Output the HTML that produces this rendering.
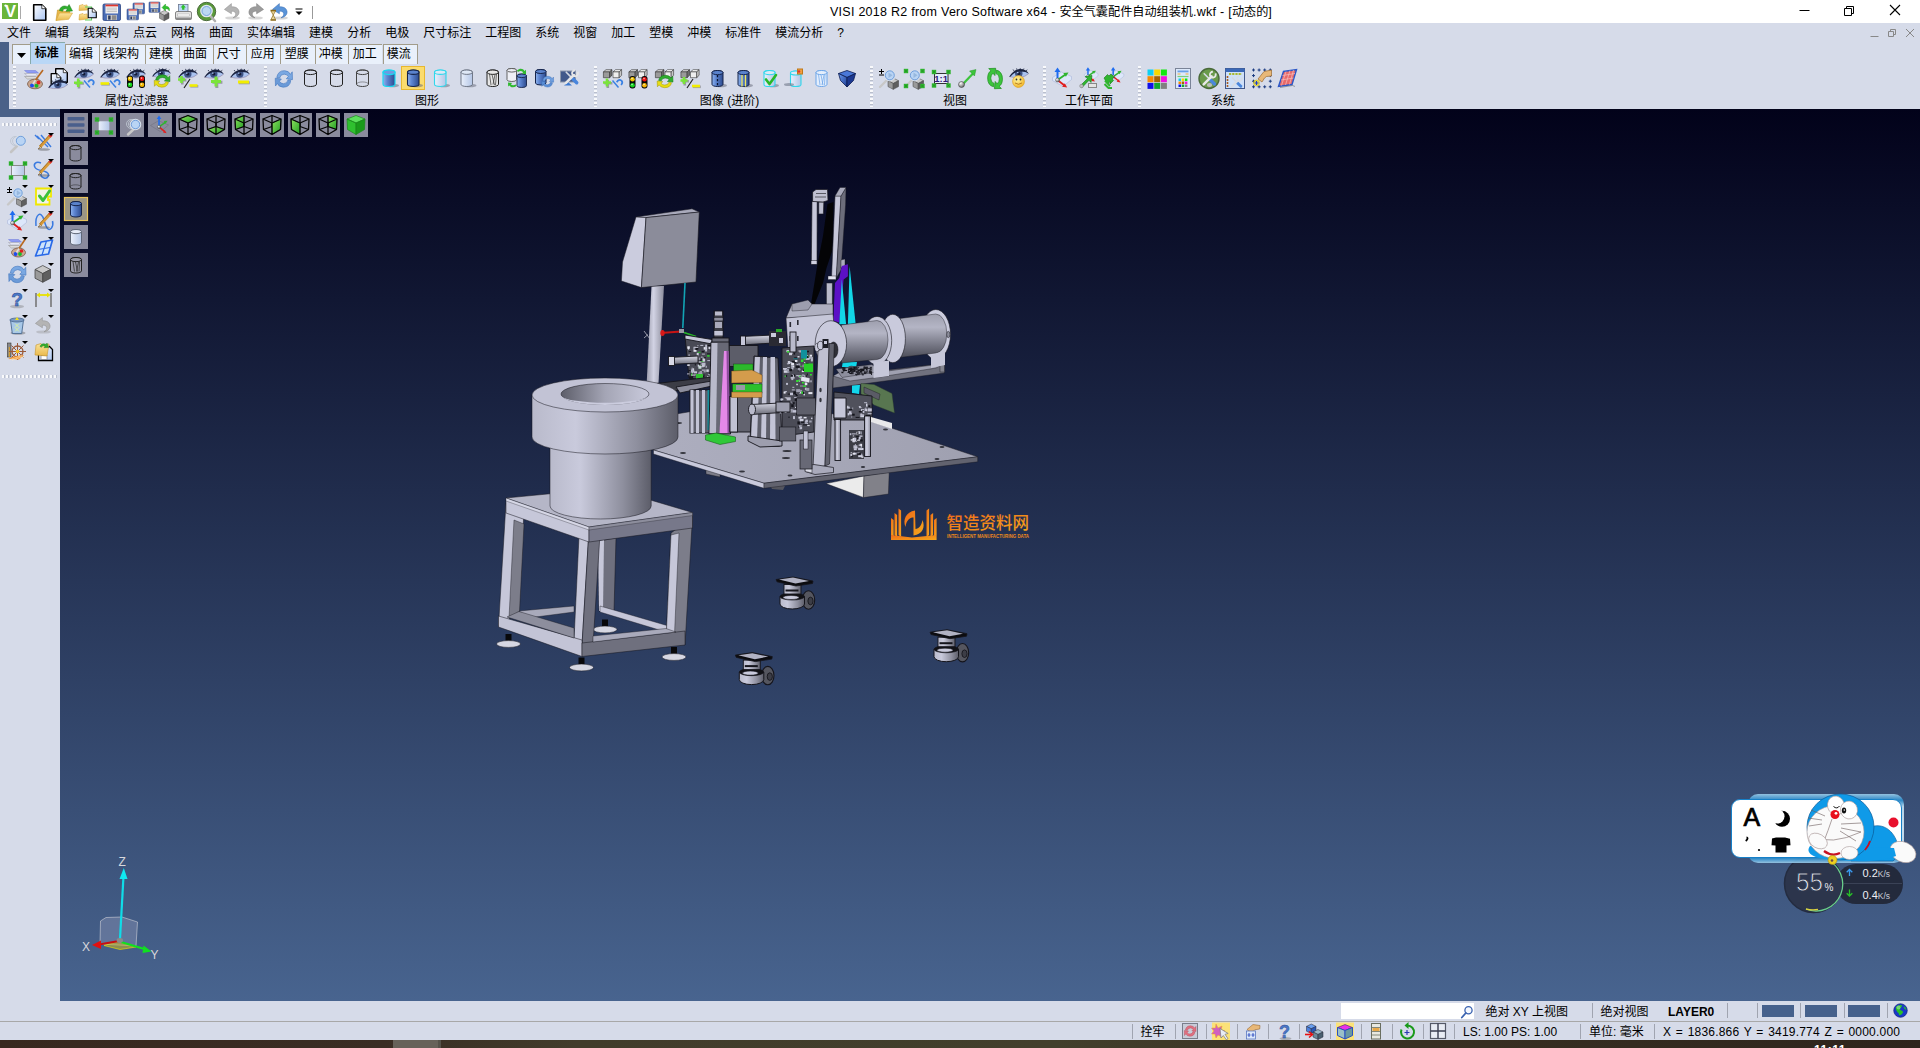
<!DOCTYPE html><html lang="zh"><head><meta charset="utf-8"><title>VISI 2018 R2</title><style>
*{box-sizing:border-box;margin:0;padding:0}
html,body{width:1920px;height:1048px;overflow:hidden;background:#d6dbe9;font-family:"Liberation Sans","Noto Sans CJK SC",sans-serif;font-size:12px;color:#000}
.abs{position:absolute}
#title{position:absolute;left:0;top:0;width:1920px;height:23px;background:#fff}
#title .t{position:absolute;left:830px;top:1.500px;font-size:12.150px;white-space:nowrap;color:#000}
#title .t b{font-weight:normal;font-size:12.500px;letter-spacing:.26px}
#menu{position:absolute;left:0;top:23px;width:1920px;height:20px;background:#d6dbe9;white-space:nowrap}
#menu span{display:inline-block;padding:0 7px;line-height:21px;font-size:12px}
#lstrip{position:absolute;left:0;top:42px;width:9px;height:75px;background:#4a6188}
#lstrip2{position:absolute;left:0;top:109px;width:60px;height:8px;background:#4a6188}
#tabs{position:absolute;left:12px;top:44px;height:20px;white-space:nowrap}
.tab{position:absolute;top:0;height:20px;background:#e9f0fb;border:1px solid #a29c8a;border-bottom:none;border-right:none;font-size:12px;line-height:19px;text-align:center;padding-right:2.500px}
.tab.act{top:-2px;height:22px;background:#b9d7f6;font-weight:bold;line-height:21px;border-color:#8aa}
#toolbar{position:absolute;left:9px;top:64px;width:1911px;height:45px;background:#d6dbe9}
.grip{position:absolute;width:3px;top:66px;height:41px;background-image:repeating-linear-gradient(#fff 0 2px,#b4bac8 2px 3px,rgba(0,0,0,0) 3px 4px);opacity:.85}
.glabel{position:absolute;top:93.800px;font-size:12px;line-height:14px;white-space:nowrap;transform:translateX(-50%)}
#side{position:absolute;left:0;top:117px;width:60px;height:884px;background:#d6dbe9}
.hgrip{position:absolute;left:2px;width:56px;height:3px;background-image:repeating-linear-gradient(90deg,#fff 0 2px,#b4bac8 2px 3px,rgba(0,0,0,0) 3px 4px);opacity:.85}
#view{position:absolute;left:60px;top:109px;width:1860px;height:892px;background:linear-gradient(#02021a 0%,#48648f 100%);overflow:hidden}
#st1{position:absolute;left:0;top:1001px;width:1920px;height:20px;background:#d6dbe9}
#st2{position:absolute;left:0;top:1021px;width:1920px;height:19px;background:#d6dbe9;border-top:1px solid #a8a8a8}
#task{position:absolute;left:0;top:1040px;width:1920px;height:8px;background:linear-gradient(90deg,#38281f 0%,#3a2d24 20%,#413c2b 30%,#423f2c 55%,#3a3224 70%,#2e241c 100%)}
.ico{position:absolute;overflow:visible}
.st{position:absolute;font-size:12px;line-height:14px;white-space:nowrap}
.vsep{position:absolute;width:1px;background:#a0a4b0}
</style></head><body>
<div id="title"><div class="t"><b>VISI 2018 R2 from Vero Software x64 - </b>安全气囊配件自动组装机<b>.wkf - [</b>动态的<b>]</b></div>
<svg class="ico" style="left:0px;top:0px" width="1920" height="23" viewBox="0 0 1920 23"><defs><linearGradient id="gb" x1="0" x2="1"><stop offset="0" stop-color="#8fb4ee"/><stop offset=".35" stop-color="#5e86d2"/><stop offset="1" stop-color="#2c4a8e"/></linearGradient><linearGradient id="gl" x1="0" x2="1"><stop offset="0" stop-color="#eaf0fb"/><stop offset="1" stop-color="#b4c6e6"/></linearGradient><linearGradient id="gdoc" x1="0" y1="0" x2="1" y2="1"><stop offset="0" stop-color="#ffffff"/><stop offset="1" stop-color="#a9c4f2"/></linearGradient><linearGradient id="gfold" x1="0" y1="0" x2="0" y2="1"><stop offset="0" stop-color="#fbe39a"/><stop offset="1" stop-color="#e9b94b"/></linearGradient><linearGradient id="ggrey" x1="0" y1="0" x2="0" y2="1"><stop offset="0" stop-color="#c9c9c9"/><stop offset="1" stop-color="#7d7d7d"/></linearGradient><linearGradient id="ggem" x1="0" y1="0" x2="1" y2="1"><stop offset="0" stop-color="#6c9cf0"/><stop offset="1" stop-color="#1c3c94"/></linearGradient><radialGradient id="gsmile" cx=".4" cy=".35" r=".7"><stop offset="0" stop-color="#fff6a0"/><stop offset="1" stop-color="#f0b020"/></radialGradient><radialGradient id="gball" cx=".35" cy=".3" r=".8"><stop offset="0" stop-color="#ffffff"/><stop offset="1" stop-color="#555"/></radialGradient><linearGradient id="ggreen" x1="0" y1="0" x2="1" y2="1"><stop offset="0" stop-color="#8ee060"/><stop offset="1" stop-color="#23a023"/></linearGradient></defs><rect x="2" y="3" width="16" height="16" fill="#6ab53a"/><text x="10.600" y="17" font-size="16.500" font-weight="bold" fill="#fff" text-anchor="middle" font-family="Liberation Sans,sans-serif">V</text><circle cx="5.600" cy="5.600" r="1.200" fill="#fff"/><rect x="20" y="6" width="1" height="13" fill="#aaa"/><g transform="translate(33.00 4.00)" ><path d="M0.7 0.7h8.1l4 4v11.6h-12.1z" fill="url(#gdoc)" stroke="#000" stroke-width="1.6" stroke-linejoin="round"/><path d="M8.8 0.7v4h4" fill="#fff" stroke="#000" stroke-width=".7"/></g><g transform="translate(55.00 4.00)" ><path d="M1 16.500l1.500-10.500h5l1 1.300h6.500l-.5 2z" fill="#e8b84a" stroke="#c8962a" stroke-width=".6"/><path d="M1 16.500l3.500-7.500h13l-3.800 6.300z" fill="url(#gfold)" stroke="#d6a53a" stroke-width=".6"/><path d="M4.500 6.500c.5-4 4.500-5.500 8-3.800l1.600-2.200 3.400 6.500-6.600.3 1.400-2c-2-1-4.300-.4-4.800 2z" fill="#2fae2f" stroke="#1a7a1a" stroke-width=".5"/></g><g transform="translate(78.00 3.00)" ><path d="M1 7.500l.5-5 3.500-1 1 1 3-.600.500 5.100z" fill="url(#gfold)" stroke="#d6a53a" stroke-width=".6"/><path d="M1 17l.5-5.500 3.500-1 1 1 3-.600.500 5.100z" fill="url(#gfold)" stroke="#d6a53a" stroke-width=".6"/><path d="M7 4h6.500v13H7" fill="none" stroke="#5fd25f" stroke-width="1.100"/><g transform="translate(9.50 4.50)" ><path d="M0.7 0.7h4.1l4 4v5.6h-8.1z" fill="url(#gdoc)" stroke="#000" stroke-width="1.1" stroke-linejoin="round"/><path d="M4.8 0.7v4h4" fill="#fff" stroke="#000" stroke-width=".7"/></g></g><g transform="translate(103.00 4.00)" ><g transform="scale(1.029)"><rect x="0" y="0" width="17" height="16" rx="1.3" fill="#4a6db5" stroke="#2b4482" stroke-width=".8"/><rect x="2.4" y="0.6" width="12.2" height="8.6" fill="#f4f4f4"/><rect x="2.4" y="0.6" width="12.2" height="1.7" fill="#e0382c"/><path d="M3.4 4h10.2M3.4 5.7h10.2M3.4 7.4h10.2" stroke="#b5b5b5" stroke-width=".8"/><rect x="3.8" y="10.6" width="9.6" height="5" fill="#d0d0d0"/><rect x="5" y="11.2" width="2.4" height="4" fill="#2b3a5c"/><rect x="8.6" y="11" width="4.2" height="4.4" fill="#8a8a8a"/></g></g><g transform="translate(133.00 3.00)" ><g transform="scale(0.676)"><rect x="0" y="0" width="17" height="16" rx="1.3" fill="#4a6db5" stroke="#2b4482" stroke-width=".8"/><rect x="2.4" y="0.6" width="12.2" height="8.6" fill="#f4f4f4"/><rect x="2.4" y="0.6" width="12.2" height="1.7" fill="#e0382c"/><path d="M3.4 4h10.2M3.4 5.7h10.2M3.4 7.4h10.2" stroke="#b5b5b5" stroke-width=".8"/><rect x="3.8" y="10.6" width="9.6" height="5" fill="#d0d0d0"/><rect x="5" y="11.2" width="2.4" height="4" fill="#2b3a5c"/><rect x="8.6" y="11" width="4.2" height="4.4" fill="#8a8a8a"/></g></g><g transform="translate(127.00 9.00)" ><g transform="scale(0.676)"><rect x="0" y="0" width="17" height="16" rx="1.3" fill="#4a6db5" stroke="#2b4482" stroke-width=".8"/><rect x="2.4" y="0.6" width="12.2" height="8.6" fill="#f4f4f4"/><rect x="2.4" y="0.6" width="12.2" height="1.7" fill="#e0382c"/><path d="M3.4 4h10.2M3.4 5.7h10.2M3.4 7.4h10.2" stroke="#b5b5b5" stroke-width=".8"/><rect x="3.8" y="10.6" width="9.6" height="5" fill="#d0d0d0"/><rect x="5" y="11.2" width="2.4" height="4" fill="#2b3a5c"/><rect x="8.6" y="11" width="4.2" height="4.4" fill="#8a8a8a"/></g></g><g transform="translate(149.00 2.00)" ><g transform="scale(0.647)"><rect x="0" y="0" width="17" height="16" rx="1.3" fill="#4a6db5" stroke="#2b4482" stroke-width=".8"/><rect x="2.4" y="0.6" width="12.2" height="8.6" fill="#f4f4f4"/><rect x="2.4" y="0.6" width="12.2" height="1.7" fill="#e0382c"/><path d="M3.4 4h10.2M3.4 5.7h10.2M3.4 7.4h10.2" stroke="#b5b5b5" stroke-width=".8"/><rect x="3.8" y="10.6" width="9.6" height="5" fill="#d0d0d0"/><rect x="5" y="11.2" width="2.4" height="4" fill="#2b3a5c"/><rect x="8.6" y="11" width="4.2" height="4.4" fill="#8a8a8a"/></g></g><g transform="translate(159.50 10.50)" ><g transform="scale(0.950)"><path d="M0 2.6L5 0l5 2.6-5 2.6z" fill="#c9c9c9" stroke="#444" stroke-width=".5"/><path d="M0 2.6v5.6l5 2.6V5.2z" fill="#9a9a9a" stroke="#444" stroke-width=".5"/><path d="M10 2.6v5.6l-5 2.6V5.2z" fill="#5f5f5f" stroke="#444" stroke-width=".5"/></g></g><g transform="translate(161.00 3.00)" ><path d="M1 4.500L4.500 1v2.200c3 0 4.800 2 3.600 4.800-.2-1.800-1.500-2.400-3.600-2.300V8z" fill="#2fc02f" stroke="#1a8a1a" stroke-width=".4"/></g><g transform="translate(175.00 3.00)" ><rect x="3.500" y="1.500" width="9.500" height="8" fill="#bcd6f6" stroke="#6c7890" stroke-width=".8"/><path d="M8.200 1.500l-2.600 3h1.500v2.300h2.300V4.500h1.500z" fill="#2fc02f"/><rect x="0.500" y="8.500" width="16" height="8" rx="1.500" fill="#e4e4e4" stroke="#6a6a6a" stroke-width=".8"/><rect x="2.500" y="11" width="12" height="2" fill="#fff" stroke="#999" stroke-width=".4"/><rect x="0.500" y="14.500" width="16" height="2" fill="#8c8c8c"/></g><g transform="translate(197.00 1.50)" ><circle cx="9.500" cy="10" r="9.200" fill="#5a9a3a" stroke="#4a6a3a" stroke-width="1"/><path d="M13 14l5 5.500" stroke="#b0b0b0" stroke-width="2.600" stroke-linecap="round"/><circle cx="9.500" cy="9.500" r="5.600" fill="#bcd8f2" stroke="#e0e6ee" stroke-width="1.500"/><circle cx="9.500" cy="9.500" r="4.500" fill="none" stroke="#6a9ad8" stroke-width=".8"/></g><g transform="translate(224.00 3.00)" ><ellipse cx="8.5" cy="15" rx="7.5" ry="1.6" fill="#8a8a8a" fill-opacity=".35"/><path d="M7.4 0.6L0.4 6.4l7 4.4V8.2c3-.2 4.8 1.2 4.2 3.6-.3 1.2-1.3 2.2-2.6 3 4.2-.8 6.6-3.400 6-6.600C14.400 5 11.400 3.600 7.400 3.700z" fill="#b4b4b4" stroke="#8c8c8c" stroke-width=".5"/></g><g transform="translate(247.00 3.00)" ><g transform="translate(17 0) scale(-1 1)"><ellipse cx="8.5" cy="15" rx="7.5" ry="1.6" fill="#8a8a8a" fill-opacity=".35"/><path d="M7.4 0.6L0.4 6.4l7 4.4V8.2c3-.2 4.8 1.2 4.2 3.6-.3 1.2-1.3 2.2-2.6 3 4.2-.8 6.6-3.400 6-6.600C14.400 5 11.400 3.600 7.400 3.700z" fill="#9c9c9c" stroke="#7c7c7c" stroke-width=".5"/></g></g><g transform="translate(272.00 3.00)" ><ellipse cx="8.5" cy="15" rx="7.5" ry="1.6" fill="#8a8a8a" fill-opacity=".35"/><path d="M7.4 0.6L0.4 6.4l7 4.4V8.2c3-.2 4.8 1.2 4.2 3.6-.3 1.2-1.3 2.2-2.6 3 4.2-.8 6.6-3.400 6-6.600C14.400 5 11.400 3.600 7.400 3.700z" fill="#5a94d8" stroke="#3a6cb0" stroke-width=".5"/></g><g transform="translate(270.00 10.00)" ><path d="M0.500 0.500h5.500M0.500 10h5.500" stroke="#8a6a1a" stroke-width="1.400"/><path d="M1 1l2.200 4L1 9.500h4.500L3.300 5l2.200-4z" fill="#e8d49a" stroke="#8a6a1a" stroke-width=".7"/></g><path d="M295.500 9h7" stroke="#000" stroke-width="1"/><path d="M295.500 11.500h7l-3.500 3.500z" fill="#000"/><rect x="312" y="6" width="1" height="13" fill="#999"/><path d="M1799.500 10.500h10" stroke="#000" stroke-width="1"/><path d="M1844.500 8.500h7v7h-7z" fill="none" stroke="#000" stroke-width="1"/><path d="M1846.500 8.500v-2h7v7h-2" fill="none" stroke="#000" stroke-width="1"/><path d="M1890 5l10 10m0-10l-10 10" stroke="#000" stroke-width="1.100"/></svg>
</div>
<div id="menu"><span>文件</span><span>编辑</span><span>线架构</span><span>点云</span><span>网格</span><span>曲面</span><span>实体编辑</span><span>建模</span><span>分析</span><span>电极</span><span>尺寸标注</span><span>工程图</span><span>系统</span><span>视窗</span><span>加工</span><span>塑模</span><span>冲模</span><span>标准件</span><span>模流分析</span><span>?</span><svg class="ico" style="left:0px;top:0px" width="1920" height="20" viewBox="0 0 1920 20"><path d="M1870.500 13.500h8" stroke="#888" stroke-width="1"/><path d="M1888.500 8.500h5v5h-5z" fill="none" stroke="#888" stroke-width="1"/><path d="M1890.500 8.500v-2h5v5h-2" fill="none" stroke="#888" stroke-width="1"/><path d="M1906 6l8 8m0-8l-8 8" stroke="#888" stroke-width="1"/></svg></div>
<div id="lstrip"></div><div id="lstrip2"></div>
<div id="tabs" style="left:0">
<div class="tab" style="left:12px;width:18px"><svg width="9" height="5" style="position:absolute;left:4px;top:8px"><path d="M0 0h9l-4.5 5z" fill="#000"/></svg></div>
<div class="tab act" style="left:30.0px;width:35.0px;">标准</div>
<div class="tab" style="left:65.0px;width:33.5px;">编辑</div>
<div class="tab" style="left:98.5px;width:46.5px;">线架构</div>
<div class="tab" style="left:145.0px;width:33.7px;">建模</div>
<div class="tab" style="left:178.7px;width:34.1px;">曲面</div>
<div class="tab" style="left:212.8px;width:33.6px;">尺寸</div>
<div class="tab" style="left:246.4px;width:34.0px;">应用</div>
<div class="tab" style="left:280.4px;width:34.3px;">塑膜</div>
<div class="tab" style="left:314.7px;width:33.6px;">冲模</div>
<div class="tab" style="left:348.3px;width:34.2px;">加工</div>
<div class="tab" style="left:382.5px;width:35.1px;border-right:1px solid #a29c8a;">模流</div>
</div>
<div id="toolbar"></div>
<div class="grip" style="left:13px"></div>
<div class="grip" style="left:264px"></div>
<div class="grip" style="left:594px"></div>
<div class="grip" style="left:870px"></div>
<div class="grip" style="left:1043px"></div>
<div class="grip" style="left:1138px"></div>
<div class="glabel" style="left:136.5px">属性/过滤器</div>
<div class="glabel" style="left:427.0px">图形</div>
<div class="glabel" style="left:729.5px">图像 (进阶)</div>
<div class="glabel" style="left:955.0px">视图</div>
<div class="glabel" style="left:1089.0px">工作平面</div>
<div class="glabel" style="left:1223.0px">系统</div>
<svg class="ico" style="left:0px;top:0px" width="1920" height="110" viewBox="0 0 1920 110"><defs><linearGradient id="gb" x1="0" x2="1"><stop offset="0" stop-color="#8fb4ee"/><stop offset=".35" stop-color="#5e86d2"/><stop offset="1" stop-color="#2c4a8e"/></linearGradient><linearGradient id="gl" x1="0" x2="1"><stop offset="0" stop-color="#eaf0fb"/><stop offset="1" stop-color="#b4c6e6"/></linearGradient><linearGradient id="gdoc" x1="0" y1="0" x2="1" y2="1"><stop offset="0" stop-color="#ffffff"/><stop offset="1" stop-color="#a9c4f2"/></linearGradient><linearGradient id="gfold" x1="0" y1="0" x2="0" y2="1"><stop offset="0" stop-color="#fbe39a"/><stop offset="1" stop-color="#e9b94b"/></linearGradient><linearGradient id="ggrey" x1="0" y1="0" x2="0" y2="1"><stop offset="0" stop-color="#c9c9c9"/><stop offset="1" stop-color="#7d7d7d"/></linearGradient><linearGradient id="ggem" x1="0" y1="0" x2="1" y2="1"><stop offset="0" stop-color="#6c9cf0"/><stop offset="1" stop-color="#1c3c94"/></linearGradient><radialGradient id="gsmile" cx=".4" cy=".35" r=".7"><stop offset="0" stop-color="#fff6a0"/><stop offset="1" stop-color="#f0b020"/></radialGradient><radialGradient id="gball" cx=".35" cy=".3" r=".8"><stop offset="0" stop-color="#ffffff"/><stop offset="1" stop-color="#555"/></radialGradient><linearGradient id="ggreen" x1="0" y1="0" x2="1" y2="1"><stop offset="0" stop-color="#8ee060"/><stop offset="1" stop-color="#23a023"/></linearGradient></defs><g transform="translate(24.00 69.00)" ><path d="M0.500 1.500h11l3 2.500h-11z" fill="#8f9cf4" stroke="#6a78d8" stroke-width=".5"/><path d="M0.500 4.500h11l3 2.500h-11z" fill="#e6e8f2" stroke="#9a9aa8" stroke-width=".5"/><path d="M0.500 7.500h11l3 2.500h-11z" fill="#dcdcdc" stroke="#8a8a8a" stroke-width=".5"/><ellipse cx="11" cy="15" rx="7.500" ry="4.800" fill="#c9a58e" stroke="#7a5a48" stroke-width=".8"/><circle cx="8" cy="16.500" r="2" fill="#1c4cf0"/><circle cx="12.500" cy="16.700" r="2" fill="#18b828"/><circle cx="14.500" cy="13.500" r="1.900" fill="#e02020"/><path d="M19 1L10.500 12.500" stroke="#b86820" stroke-width="1.600"/><path d="M11.500 11l-2.500 4" stroke="#ddd" stroke-width="1.800"/></g><g transform="translate(55.00 68.00)" ><path d="M0.7 0.7h7.6l4 4v9.6h-11.6z" fill="url(#gdoc)" stroke="#000" stroke-width="1.4" stroke-linejoin="round"/><path d="M8.3 0.7v4h4" fill="#fff" stroke="#000" stroke-width=".7"/></g><g transform="translate(50.50 73.00)" ><path d="M0.7 0.7h5.6l4 4v6.6h-9.6z" fill="url(#gdoc)" stroke="#000" stroke-width="1.3" stroke-linejoin="round"/><path d="M6.3 0.7v4h4" fill="#fff" stroke="#000" stroke-width=".7"/></g><g transform="translate(48.00 79.50)" ><g transform="scale(1.000)"><path d="M0.4 8 Q4.500 2.200 10.500 1.500 Q16.500 1.200 19.600 5.200 Q16.500 8.300 11 8.900 Q5 9.200 0.400 8z" fill="#a9c2ef"/><circle cx="9.800" cy="5" r="3.700" fill="#3f5486"/><circle cx="9.800" cy="5" r="1.600" fill="#151c38"/><circle cx="8.700" cy="3.900" r=".9" fill="#a9c2ef"/><path d="M0.200 8.300 Q4.200 1.600 10.500 0.500 Q17 0.100 19.900 5.300 Q16.600 2.700 10.600 3 Q5 3.500 1.300 8.500z" fill="#1b2340"/><path d="M0.400 8.100 Q5 9.600 11 9 Q16.400 8.300 19.600 5.200" stroke="#8a7494" stroke-width=".5" fill="none"/><path d="M5 2.400l-.9-1.400M8 1.300l-.4-1.400M11 .9l.3-1.200M14 1.200l.9-1.200M17 2.300l1.300-1" stroke="#1b2340" stroke-width=".8"/></g></g><g transform="translate(74.00 69.00)" ><g transform="scale(1.000)"><path d="M0.4 8 Q4.500 2.200 10.500 1.500 Q16.500 1.200 19.600 5.200 Q16.500 8.300 11 8.900 Q5 9.200 0.400 8z" fill="#a9c2ef"/><circle cx="9.800" cy="5" r="3.700" fill="#3f5486"/><circle cx="9.800" cy="5" r="1.600" fill="#151c38"/><circle cx="8.700" cy="3.900" r=".9" fill="#a9c2ef"/><path d="M0.200 8.300 Q4.200 1.600 10.500 0.500 Q17 0.100 19.900 5.300 Q16.600 2.700 10.600 3 Q5 3.500 1.300 8.500z" fill="#1b2340"/><path d="M0.400 8.100 Q5 9.600 11 9 Q16.400 8.300 19.600 5.200" stroke="#8a7494" stroke-width=".5" fill="none"/><path d="M5 2.400l-.9-1.400M8 1.300l-.4-1.400M11 .9l.3-1.200M14 1.200l.9-1.200M17 2.300l1.300-1" stroke="#1b2340" stroke-width=".8"/></g></g><g transform="translate(74.00 78.50)" ><path d="M4.2 0.6v8.5M0.6 4.2h8.5" stroke="#666" stroke-opacity=".55" stroke-width="2.6" transform="translate(.8 .8)"/><path d="M4.2 0v8.5M0 4.2h8.5" stroke="#7ae43a" stroke-width="2.6"/></g><g transform="translate(84.00 79.00)" ><path d="M0 1.5L6 8.5" stroke="#3b82e4" stroke-width="1.5" fill="none"/><path d="M4.2 3.2 Q6.2 -0.2 9 1.6 Q10.8 3.6 8.6 6" stroke="#3b82e4" stroke-width="1.7" fill="none"/></g><g transform="translate(100.00 69.00)" ><g transform="scale(1.000)"><path d="M0.4 8 Q4.500 2.200 10.500 1.500 Q16.500 1.200 19.600 5.200 Q16.500 8.300 11 8.900 Q5 9.200 0.400 8z" fill="#a9c2ef"/><circle cx="9.800" cy="5" r="3.700" fill="#3f5486"/><circle cx="9.800" cy="5" r="1.600" fill="#151c38"/><circle cx="8.700" cy="3.900" r=".9" fill="#a9c2ef"/><path d="M0.200 8.300 Q4.200 1.600 10.500 0.500 Q17 0.100 19.900 5.300 Q16.600 2.700 10.600 3 Q5 3.500 1.300 8.500z" fill="#1b2340"/><path d="M0.400 8.100 Q5 9.600 11 9 Q16.400 8.300 19.600 5.200" stroke="#8a7494" stroke-width=".5" fill="none"/><path d="M5 2.400l-.9-1.400M8 1.300l-.4-1.400M11 .9l.3-1.200M14 1.200l.9-1.200M17 2.300l1.300-1" stroke="#1b2340" stroke-width=".8"/></g></g><g transform="translate(100.50 83.50)" ><path d="M0.8 .8h8.5" stroke="#777" stroke-opacity=".6" stroke-width="2.6"/><path d="M0 0h8.5" stroke="#f2ee00" stroke-width="2.6"/></g><g transform="translate(110.00 79.00)" ><path d="M0 1.5L6 8.5" stroke="#3b82e4" stroke-width="1.5" fill="none"/><path d="M4.2 3.2 Q6.2 -0.2 9 1.6 Q10.8 3.6 8.6 6" stroke="#3b82e4" stroke-width="1.7" fill="none"/></g><g transform="translate(126.00 69.00)" ><g transform="scale(1.000)"><path d="M0.4 8 Q4.500 2.200 10.500 1.500 Q16.500 1.200 19.600 5.200 Q16.500 8.300 11 8.900 Q5 9.200 0.400 8z" fill="#a9c2ef"/><circle cx="9.800" cy="5" r="3.700" fill="#3f5486"/><circle cx="9.800" cy="5" r="1.600" fill="#151c38"/><circle cx="8.700" cy="3.900" r=".9" fill="#a9c2ef"/><path d="M0.200 8.300 Q4.200 1.600 10.500 0.500 Q17 0.100 19.900 5.300 Q16.600 2.700 10.600 3 Q5 3.500 1.300 8.500z" fill="#1b2340"/><path d="M0.400 8.100 Q5 9.600 11 9 Q16.400 8.300 19.600 5.200" stroke="#8a7494" stroke-width=".5" fill="none"/><path d="M5 2.400l-.9-1.400M8 1.300l-.4-1.400M11 .9l.3-1.200M14 1.200l.9-1.200M17 2.300l1.300-1" stroke="#1b2340" stroke-width=".8"/></g></g><g transform="translate(126.50 75.50)" ><rect x="0.5" y="0" width="6" height="12.4" rx="2.6" fill="#0a0a0a"/><circle cx="3.5" cy="3.2" r="2.3" fill="#f5c400"/><circle cx="3.0" cy="2.6" r=".8" fill="#fff" fill-opacity=".7"/><circle cx="3.5" cy="9.2" r="2.3" fill="#12d21a"/><circle cx="3.0" cy="8.6" r=".8" fill="#fff" fill-opacity=".7"/><rect x="12.5" y="0" width="6" height="12.4" rx="2.6" fill="#0a0a0a"/><circle cx="15.5" cy="3.2" r="2.3" fill="#ee1010"/><circle cx="15.0" cy="2.6" r=".8" fill="#fff" fill-opacity=".7"/><circle cx="15.5" cy="9.2" r="2.3" fill="#f5b800"/><circle cx="15.0" cy="8.6" r=".8" fill="#fff" fill-opacity=".7"/></g><g transform="translate(152.00 68.50)" ><g transform="scale(0.950)"><path d="M0.4 8 Q4.500 2.200 10.500 1.500 Q16.500 1.200 19.600 5.200 Q16.500 8.300 11 8.900 Q5 9.200 0.400 8z" fill="#a9c2ef"/><circle cx="9.800" cy="5" r="3.700" fill="#3f5486"/><circle cx="9.800" cy="5" r="1.600" fill="#151c38"/><circle cx="8.700" cy="3.900" r=".9" fill="#a9c2ef"/><path d="M0.200 8.300 Q4.200 1.600 10.500 0.500 Q17 0.100 19.900 5.300 Q16.600 2.700 10.600 3 Q5 3.500 1.300 8.500z" fill="#1b2340"/><path d="M0.400 8.100 Q5 9.600 11 9 Q16.400 8.300 19.600 5.200" stroke="#8a7494" stroke-width=".5" fill="none"/><path d="M5 2.400l-.9-1.400M8 1.300l-.4-1.400M11 .9l.3-1.200M14 1.200l.9-1.200M17 2.300l1.300-1" stroke="#1b2340" stroke-width=".8"/></g></g><g transform="translate(154.00 74.00)" ><g transform="scale(1.08)"><path d="M1.5 5.5 Q2.5 0.8 8 0.8 Q12 1 13 3.4 L14.6 1.6 L14.8 7 L9.6 6.4 L11.3 4.9 Q10 3.2 7.8 3.2 Q4.5 3.3 4 5.8z" fill="#2fae2f" stroke="#157a15" stroke-width=".5"/><path d="M13.4 7.6 Q12.6 12.2 7 12.2 Q3 12 2 9.6 L0.4 11.4 L0.2 6 L5.4 6.6 L3.7 8.1 Q5 9.8 7.2 9.8 Q10.5 9.7 11 7.2z" fill="#e8de10" stroke="#a59a00" stroke-width=".5"/></g></g><g transform="translate(178.00 69.00)" ><g transform="scale(1.000)"><path d="M0.4 8 Q4.500 2.200 10.500 1.500 Q16.500 1.200 19.600 5.200 Q16.500 8.300 11 8.900 Q5 9.200 0.400 8z" fill="#a9c2ef"/><circle cx="9.800" cy="5" r="3.700" fill="#3f5486"/><circle cx="9.800" cy="5" r="1.600" fill="#151c38"/><circle cx="8.700" cy="3.900" r=".9" fill="#a9c2ef"/><path d="M0.200 8.300 Q4.200 1.600 10.500 0.500 Q17 0.100 19.900 5.300 Q16.600 2.700 10.600 3 Q5 3.500 1.300 8.500z" fill="#1b2340"/><path d="M0.400 8.100 Q5 9.600 11 9 Q16.400 8.300 19.600 5.200" stroke="#8a7494" stroke-width=".5" fill="none"/><path d="M5 2.400l-.9-1.400M8 1.300l-.4-1.400M11 .9l.3-1.200M14 1.200l.9-1.200M17 2.300l1.300-1" stroke="#1b2340" stroke-width=".8"/></g></g><g transform="translate(178.00 76.00)" ><path d="M3.5 0.6v7.0M0.6 3.5h7.0" stroke="#666" stroke-opacity=".55" stroke-width="2.6" transform="translate(.8 .8)"/><path d="M3.5 0v7.0M0 3.5h7.0" stroke="#7ae43a" stroke-width="2.6"/></g><path d="M184 88l6-9" stroke="#222" stroke-width="1.200"/><g transform="translate(189.50 85.50)" ><path d="M0.8 .8h8.0" stroke="#777" stroke-opacity=".6" stroke-width="2.6"/><path d="M0 0h8.0" stroke="#f2ee00" stroke-width="2.6"/></g><g transform="translate(204.00 69.00)" ><g transform="scale(1.000)"><path d="M0.4 8 Q4.500 2.200 10.500 1.500 Q16.500 1.200 19.600 5.200 Q16.500 8.300 11 8.900 Q5 9.200 0.400 8z" fill="#a9c2ef"/><circle cx="9.800" cy="5" r="3.700" fill="#3f5486"/><circle cx="9.800" cy="5" r="1.600" fill="#151c38"/><circle cx="8.700" cy="3.900" r=".9" fill="#a9c2ef"/><path d="M0.200 8.300 Q4.200 1.600 10.500 0.500 Q17 0.100 19.900 5.300 Q16.600 2.700 10.600 3 Q5 3.500 1.300 8.500z" fill="#1b2340"/><path d="M0.400 8.100 Q5 9.600 11 9 Q16.400 8.300 19.600 5.200" stroke="#8a7494" stroke-width=".5" fill="none"/><path d="M5 2.400l-.9-1.400M8 1.300l-.4-1.400M11 .9l.3-1.200M14 1.200l.9-1.200M17 2.300l1.300-1" stroke="#1b2340" stroke-width=".8"/></g></g><g transform="translate(211.00 76.50)" ><path d="M5.0 0.6v10.0M0.6 5.0h10.0" stroke="#666" stroke-opacity=".55" stroke-width="3.0" transform="translate(.8 .8)"/><path d="M5.0 0v10.0M0 5.0h10.0" stroke="#7ae43a" stroke-width="3.0"/></g><g transform="translate(230.00 69.00)" ><g transform="scale(1.000)"><path d="M0.4 8 Q4.500 2.200 10.500 1.500 Q16.500 1.200 19.600 5.200 Q16.500 8.300 11 8.900 Q5 9.200 0.400 8z" fill="#a9c2ef"/><circle cx="9.800" cy="5" r="3.700" fill="#3f5486"/><circle cx="9.800" cy="5" r="1.600" fill="#151c38"/><circle cx="8.700" cy="3.900" r=".9" fill="#a9c2ef"/><path d="M0.200 8.300 Q4.200 1.600 10.500 0.500 Q17 0.100 19.900 5.300 Q16.600 2.700 10.600 3 Q5 3.500 1.300 8.500z" fill="#1b2340"/><path d="M0.400 8.100 Q5 9.600 11 9 Q16.400 8.300 19.600 5.200" stroke="#8a7494" stroke-width=".5" fill="none"/><path d="M5 2.400l-.9-1.400M8 1.300l-.4-1.400M11 .9l.3-1.200M14 1.200l.9-1.200M17 2.300l1.300-1" stroke="#1b2340" stroke-width=".8"/></g></g><g transform="translate(238.00 82.00)" ><path d="M0.8 .8h11.0" stroke="#777" stroke-opacity=".6" stroke-width="3.0"/><path d="M0 0h11.0" stroke="#f2ee00" stroke-width="3.0"/></g><g transform="translate(275.00 69.50)" ><g transform="scale(1.18 1.45)"><path d="M1.5 5.5 Q2.5 0.8 8 0.8 Q12 1 13 3.4 L14.6 1.6 L14.8 7 L9.6 6.4 L11.3 4.9 Q10 3.2 7.8 3.2 Q4.5 3.3 4 5.8z" fill="#7aa8e2" stroke="#4a7cc0" stroke-width=".5"/><path d="M13.4 7.6 Q12.6 12.2 7 12.2 Q3 12 2 9.6 L0.4 11.4 L0.2 6 L5.4 6.6 L3.7 8.1 Q5 9.8 7.2 9.8 Q10.5 9.7 11 7.2z" fill="#6a9ad8" stroke="#4a7cc0" stroke-width=".5"/></g></g><g transform="translate(304.50 70.00)" ><path d="M0 2.28 V14.22 A6.00 2.28 0 0 0 12.00 14.22 V2.28 A6.00 2.28 0 0 0 0 2.28z" fill="none" stroke="#222" stroke-width="1.0"/><ellipse cx="6.00" cy="2.28" rx="6.00" ry="2.28" fill="none" stroke="#222" stroke-width="1.0"/></g><g transform="translate(330.50 70.00)" ><path d="M0 2.28 V14.22 A6.00 2.28 0 0 0 12.00 14.22 V2.28 A6.00 2.28 0 0 0 0 2.28z" fill="none" stroke="#222" stroke-width="1.0"/><ellipse cx="6.00" cy="2.28" rx="6.00" ry="2.28" fill="none" stroke="#222" stroke-width="1.0"/></g><g transform="translate(356.50 70.00)" ><path d="M0 2.28 V14.22 A6.00 2.28 0 0 0 12.00 14.22 V2.28 A6.00 2.28 0 0 0 0 2.28z" fill="none" stroke="#444" stroke-width="1.0"/><ellipse cx="6.00" cy="2.28" rx="6.00" ry="2.28" fill="none" stroke="#444" stroke-width="1.0"/><path d="M0 14.22 A6.00 2.28 0 0 1 12.00 14.22" fill="none" stroke="#444" stroke-width=".7" stroke-opacity=".7"/></g><g transform="translate(383.00 70.00)" ><ellipse cx="9.4" cy="15.5" rx="6.6" ry="1.7" fill="#6b7080" fill-opacity=".55"/><path d="M0 2.28 V14.22 A6.00 2.28 0 0 0 12.00 14.22 V2.28 A6.00 2.28 0 0 0 0 2.28z" fill="url(#gb)" stroke="#18d8f0" stroke-width="1.2"/><ellipse cx="6.00" cy="2.28" rx="6.00" ry="2.28" fill="#6e9ae0" stroke="#18d8f0" stroke-width="1.2"/></g><rect x="401.500" y="66.500" width="23" height="23" fill="#fbdc6e" stroke="#e8b830" stroke-width="1"/><g transform="translate(407.50 70.00)" ><ellipse cx="9.2" cy="15.5" rx="6.3" ry="1.7" fill="#6b7080" fill-opacity=".55"/><path d="M0 2.19 V14.31 A5.75 2.19 0 0 0 11.50 14.31 V2.19 A5.75 2.19 0 0 0 0 2.19z" fill="url(#gb)" stroke="#16244a" stroke-width="1.1"/><ellipse cx="5.75" cy="2.19" rx="5.75" ry="2.19" fill="#5a82cc" stroke="#16244a" stroke-width="1.1"/></g><g transform="translate(434.50 70.00)" ><ellipse cx="9.2" cy="15.5" rx="6.3" ry="1.7" fill="#6b7080" fill-opacity=".55"/><path d="M0 2.19 V14.31 A5.75 2.19 0 0 0 11.50 14.31 V2.19 A5.75 2.19 0 0 0 0 2.19z" fill="url(#gl)" stroke="#30d8ec" stroke-width="1.1"/><ellipse cx="5.75" cy="2.19" rx="5.75" ry="2.19" fill="#dfe8f6" stroke="#30d8ec" stroke-width="1.1"/></g><g transform="translate(461.00 70.00)" ><ellipse cx="9.2" cy="15.5" rx="6.3" ry="1.7" fill="#6b7080" fill-opacity=".55"/><path d="M0 2.19 V14.31 A5.75 2.19 0 0 0 11.50 14.31 V2.19 A5.75 2.19 0 0 0 0 2.19z" fill="url(#gl)" stroke="#707888" stroke-width="1.0"/><ellipse cx="5.75" cy="2.19" rx="5.75" ry="2.19" fill="#dfe8f6" stroke="#707888" stroke-width="1.0"/></g><g transform="translate(487.00 70.00)" ><path d="M0 2.19 V14.31 A5.75 2.19 0 0 0 11.50 14.31 V2.19 A5.75 2.19 0 0 0 0 2.19z" fill="#e8e8e8" stroke="#222" stroke-width="1.0"/><ellipse cx="5.75" cy="2.19" rx="5.75" ry="2.19" fill="#e8e8e8" stroke="#222" stroke-width="1.0"/><path d="M2.500 4l1.500 11M5 4.500l2.500 10.500M8 4.500l-2 10M9.500 4l-1 11" stroke="#333" stroke-width=".7" fill="none"/></g><g transform="translate(507.00 68.50)" ><path d="M0 1.80 V11.20 A4.75 1.80 0 0 0 9.50 11.20 V1.80 A4.75 1.80 0 0 0 0 1.80z" fill="#eef0f6" stroke="#555" stroke-width="0.9"/><ellipse cx="4.75" cy="1.80" rx="4.75" ry="1.80" fill="#eef0f6" stroke="#555" stroke-width="0.9"/></g><g transform="translate(517.00 74.00)" ><path d="M0 1.80 V11.70 A4.75 1.80 0 0 0 9.50 11.70 V1.80 A4.75 1.80 0 0 0 0 1.80z" fill="url(#gb)" stroke="#16244a" stroke-width="0.9"/><ellipse cx="4.75" cy="1.80" rx="4.75" ry="1.80" fill="#5a82cc" stroke="#16244a" stroke-width="0.9"/></g><path d="M517 70.500c3-2.500 6-2 7.500.5l1.500-1.200v4.400l-4.200-.6 1.300-1.300c-1.300-1.600-3.300-1.600-5.200-.3z" fill="#2fba2f"/><path d="M516.500 86c-3 2-5.500 1.600-7-.6l-1.300 1.200-.2-4.200 4.200.5-1.400 1.300c1.200 1.300 3 1.400 5 .3z" fill="#2fba2f"/><g transform="translate(535.50 69.50)" ><path d="M0 2.00 V13.50 A5.25 2.00 0 0 0 10.50 13.50 V2.00 A5.25 2.00 0 0 0 0 2.00z" fill="url(#gb)" stroke="#16244a" stroke-width="1.0"/><ellipse cx="5.25" cy="2.00" rx="5.25" ry="2.00" fill="#5a82cc" stroke="#16244a" stroke-width="1.0"/></g><g transform="translate(541.50 75.50)" ><g transform="scale(.82 .95)"><path d="M1.5 5.5 Q2.5 0.8 8 0.8 Q12 1 13 3.4 L14.6 1.6 L14.8 7 L9.6 6.4 L11.3 4.9 Q10 3.2 7.8 3.2 Q4.5 3.3 4 5.8z" fill="#6e9fe0" stroke="#3d6fb8" stroke-width=".5"/><path d="M13.4 7.6 Q12.6 12.2 7 12.2 Q3 12 2 9.6 L0.4 11.4 L0.2 6 L5.4 6.6 L3.7 8.1 Q5 9.8 7.2 9.8 Q10.5 9.7 11 7.2z" fill="#5a8fd6" stroke="#3d6fb8" stroke-width=".5"/></g></g><g transform="translate(560.00 69.00)" ><rect x="0.500" y="2" width="15" height="11" fill="#42598a" stroke="#8d97aa" stroke-width="1"/><path d="M4 16.500l4-3.500 4 3.500z" fill="#3a78d0"/><g transform="translate(3.50 0.50)" ><g transform="scale(1.1)"><path d="M2.500 2.500l6 6" stroke="#d4d8e0" stroke-width="1.500" stroke-linecap="round"/><path d="M8 8l4 4" stroke="#4a86dc" stroke-width="3.200" stroke-linecap="round"/><path d="M2 12.400l7.400-7.400" stroke="#e6e6e6" stroke-width="2.300" stroke-linecap="round"/><path d="M12.900 2.200a2.700 2.700 0 1 1-2.400-1.500" stroke="#e6e6e6" stroke-width="1.700" fill="none"/></g></g></g><g transform="translate(603.00 69.50)" ><path d="M0.4 2.4l2.6-2.2h6l-2.4 2.2z" fill="#d8d8d8" stroke="#333" stroke-width=".6"/><path d="M0.4 2.4h6.2v5.8h-6.2z" fill="#9a9a9a" stroke="#333" stroke-width=".6"/><path d="M6.6 2.4l2.4-2.2v5.6l-2.4 2.4z" fill="#6e6e6e" stroke="#333" stroke-width=".6"/><path d="M10.0 2.4l2.6-2.2h6l-2.4 2.2z" fill="#ffffff" stroke="#333" stroke-width=".6"/><path d="M10.0 2.4h6.2v5.8h-6.2z" fill="#eeeeee" stroke="#333" stroke-width=".6"/><path d="M16.2 2.4l2.4-2.2v5.6l-2.4 2.4z" fill="#c8c8c8" stroke="#333" stroke-width=".6"/></g><g transform="translate(603.00 78.50)" ><path d="M4.0 0.6v8.0M0.6 4.0h8.0" stroke="#666" stroke-opacity=".55" stroke-width="2.6" transform="translate(.8 .8)"/><path d="M4.0 0v8.0M0 4.0h8.0" stroke="#7ae43a" stroke-width="2.6"/></g><g transform="translate(612.50 79.00)" ><path d="M0 1.5L6 8.5" stroke="#3b82e4" stroke-width="1.5" fill="none"/><path d="M4.2 3.2 Q6.2 -0.2 9 1.6 Q10.8 3.6 8.6 6" stroke="#3b82e4" stroke-width="1.7" fill="none"/></g><g transform="translate(628.50 69.50)" ><path d="M0.4 2.4l2.6-2.2h6l-2.4 2.2z" fill="#d8d8d8" stroke="#333" stroke-width=".6"/><path d="M0.4 2.4h6.2v5.8h-6.2z" fill="#9a9a9a" stroke="#333" stroke-width=".6"/><path d="M6.6 2.4l2.4-2.2v5.6l-2.4 2.4z" fill="#6e6e6e" stroke="#333" stroke-width=".6"/><path d="M10.0 2.4l2.6-2.2h6l-2.4 2.2z" fill="#ffffff" stroke="#333" stroke-width=".6"/><path d="M10.0 2.4h6.2v5.8h-6.2z" fill="#eeeeee" stroke="#333" stroke-width=".6"/><path d="M16.2 2.4l2.4-2.2v5.6l-2.4 2.4z" fill="#c8c8c8" stroke="#333" stroke-width=".6"/></g><g transform="translate(629.00 76.00)" ><rect x="0.5" y="0" width="6" height="12.4" rx="2.6" fill="#0a0a0a"/><circle cx="3.5" cy="3.2" r="2.3" fill="#f5c400"/><circle cx="3.0" cy="2.6" r=".8" fill="#fff" fill-opacity=".7"/><circle cx="3.5" cy="9.2" r="2.3" fill="#12d21a"/><circle cx="3.0" cy="8.6" r=".8" fill="#fff" fill-opacity=".7"/><rect x="12.5" y="0" width="6" height="12.4" rx="2.6" fill="#0a0a0a"/><circle cx="15.5" cy="3.2" r="2.3" fill="#ee1010"/><circle cx="15.0" cy="2.6" r=".8" fill="#fff" fill-opacity=".7"/><circle cx="15.5" cy="9.2" r="2.3" fill="#f5b800"/><circle cx="15.0" cy="8.6" r=".8" fill="#fff" fill-opacity=".7"/></g><g transform="translate(655.00 69.50)" ><path d="M0.4 2.4l2.6-2.2h6l-2.4 2.2z" fill="#d8d8d8" stroke="#333" stroke-width=".6"/><path d="M0.4 2.4h6.2v5.8h-6.2z" fill="#9a9a9a" stroke="#333" stroke-width=".6"/><path d="M6.6 2.4l2.4-2.2v5.6l-2.4 2.4z" fill="#6e6e6e" stroke="#333" stroke-width=".6"/><path d="M10.0 2.4l2.6-2.2h6l-2.4 2.2z" fill="#ffffff" stroke="#333" stroke-width=".6"/><path d="M10.0 2.4h6.2v5.8h-6.2z" fill="#eeeeee" stroke="#333" stroke-width=".6"/><path d="M16.2 2.4l2.4-2.2v5.6l-2.4 2.4z" fill="#c8c8c8" stroke="#333" stroke-width=".6"/></g><g transform="translate(657.00 74.50)" ><g transform="scale(1.08)"><path d="M1.5 5.5 Q2.5 0.8 8 0.8 Q12 1 13 3.4 L14.6 1.6 L14.8 7 L9.6 6.4 L11.3 4.9 Q10 3.2 7.8 3.2 Q4.5 3.3 4 5.8z" fill="#2fae2f" stroke="#157a15" stroke-width=".5"/><path d="M13.4 7.6 Q12.6 12.2 7 12.2 Q3 12 2 9.6 L0.4 11.4 L0.2 6 L5.4 6.6 L3.7 8.1 Q5 9.8 7.2 9.8 Q10.5 9.7 11 7.2z" fill="#e8de10" stroke="#a59a00" stroke-width=".5"/></g></g><g transform="translate(680.50 69.50)" ><path d="M0.4 2.4l2.6-2.2h6l-2.4 2.2z" fill="#d8d8d8" stroke="#333" stroke-width=".6"/><path d="M0.4 2.4h6.2v5.8h-6.2z" fill="#9a9a9a" stroke="#333" stroke-width=".6"/><path d="M6.6 2.4l2.4-2.2v5.6l-2.4 2.4z" fill="#6e6e6e" stroke="#333" stroke-width=".6"/><path d="M10.0 2.4l2.6-2.2h6l-2.4 2.2z" fill="#ffffff" stroke="#333" stroke-width=".6"/><path d="M10.0 2.4h6.2v5.8h-6.2z" fill="#eeeeee" stroke="#333" stroke-width=".6"/><path d="M16.2 2.4l2.4-2.2v5.6l-2.4 2.4z" fill="#c8c8c8" stroke="#333" stroke-width=".6"/></g><g transform="translate(680.50 77.00)" ><path d="M3.5 0.6v7.0M0.6 3.5h7.0" stroke="#666" stroke-opacity=".55" stroke-width="2.6" transform="translate(.8 .8)"/><path d="M3.5 0v7.0M0 3.5h7.0" stroke="#7ae43a" stroke-width="2.6"/></g><path d="M687 88l6-9" stroke="#222" stroke-width="1.200"/><g transform="translate(692.00 86.00)" ><path d="M0.8 .8h8.0" stroke="#777" stroke-opacity=".6" stroke-width="2.6"/><path d="M0 0h8.0" stroke="#f2ee00" stroke-width="2.6"/></g><g transform="translate(712.00 70.50)" ><ellipse cx="8.9" cy="15.0" rx="6.1" ry="1.7" fill="#6b7080" fill-opacity=".55"/><path d="M0 2.09 V13.91 A5.50 2.09 0 0 0 11.00 13.91 V2.09 A5.50 2.09 0 0 0 0 2.09z" fill="url(#gb)" stroke="#16244a" stroke-width="1.0"/><ellipse cx="5.50" cy="2.09" rx="5.50" ry="2.09" fill="#5a82cc" stroke="#16244a" stroke-width="1.0"/></g><path d="M717.500 75v11" stroke="#0a1430" stroke-width="1.300" stroke-dasharray="2.200 1.800"/><g transform="translate(738.00 70.50)" ><ellipse cx="8.9" cy="15.0" rx="6.1" ry="1.7" fill="#6b7080" fill-opacity=".55"/><path d="M0 2.09 V13.91 A5.50 2.09 0 0 0 11.00 13.91 V2.09 A5.50 2.09 0 0 0 0 2.09z" fill="url(#gb)" stroke="#16244a" stroke-width="1.0"/><ellipse cx="5.50" cy="2.09" rx="5.50" ry="2.09" fill="#5a82cc" stroke="#16244a" stroke-width="1.0"/></g><path d="M742 75v11.500M745.500 75v11.500" stroke="#f0e860" stroke-width="1.300"/><g transform="translate(764.00 70.50)" ><ellipse cx="8.9" cy="15.0" rx="6.1" ry="1.7" fill="#6b7080" fill-opacity=".55"/><path d="M0 2.09 V13.91 A5.50 2.09 0 0 0 11.00 13.91 V2.09 A5.50 2.09 0 0 0 0 2.09z" fill="url(#gl)" stroke="#30d8ec" stroke-width="1.1"/><ellipse cx="5.50" cy="2.09" rx="5.50" ry="2.09" fill="#dfe8f6" stroke="#30d8ec" stroke-width="1.1"/></g><path d="M766 79.500l3.500 4.500 6.500-9" stroke="#28b828" stroke-width="2.600" fill="none" stroke-linecap="round" stroke-linejoin="round"/><g transform="translate(790.50 71.00)" ><path d="M0 2.00 V13.50 A5.25 2.00 0 0 0 10.50 13.50 V2.00 A5.25 2.00 0 0 0 0 2.00z" fill="url(#gl)" stroke="#30d8ec" stroke-width="1.1"/><ellipse cx="5.25" cy="2.00" rx="5.25" ry="2.00" fill="#dfe8f6" stroke="#30d8ec" stroke-width="1.1"/></g><ellipse cx="789" cy="84.500" rx="5" ry="1.500" fill="#70788a" fill-opacity=".6"/><rect x="797.500" y="69" width="5" height="5" fill="#f0a040" stroke="#c07818" stroke-width="1"/><circle cx="799" cy="71.500" r="1.300" fill="#e03030"/><g transform="translate(816.00 70.50)" ><path d="M0 2.09 V13.91 A5.50 2.09 0 0 0 11.00 13.91 V2.09 A5.50 2.09 0 0 0 0 2.09z" fill="#e4eefc" stroke="#6aa4e8" stroke-width="1.0"/><ellipse cx="5.50" cy="2.09" rx="5.50" ry="2.09" fill="#e4eefc" stroke="#6aa4e8" stroke-width="1.0"/><path d="M2.500 4l1.500 10.500M5 4.500l2 10M8 4.500l-2 10M9 4l-.5 10.500" stroke="#6aa4e8" stroke-width=".7" fill="none"/></g><g transform="translate(838.00 70.00)" ><path d="M0.500 3.500L9 0.500l8.500 3L9 7.500z" fill="#4a78d8" stroke="#0c1c50" stroke-width=".8"/><path d="M0.500 3.500L9 7.500v9.500L2.500 10.500z" fill="url(#ggem)" stroke="#0c1c50" stroke-width=".8"/><path d="M17.500 3.500L9 7.500v9.500l6.500-6.500z" fill="#1c3890" stroke="#0c1c50" stroke-width=".8"/></g><g transform="translate(888.00 78.00)" ><g transform="scale(1.050)"><path d="M0 2.6L5 0l5 2.6-5 2.6z" fill="#c9c9c9" stroke="#444" stroke-width=".5"/><path d="M0 2.6v5.6l5 2.6V5.2z" fill="#9a9a9a" stroke="#444" stroke-width=".5"/><path d="M10 2.6v5.6l-5 2.6V5.2z" fill="#5f5f5f" stroke="#444" stroke-width=".5"/></g></g><path d="M887.0 80.0l-7 7" stroke="#c8c8c8" stroke-width="2.400" stroke-linecap="round"/><g transform="translate(883.50 69.00)" ><circle cx="6.3" cy="6.3" r="5.3" fill="#b9d4f4" stroke="#d6dde8" stroke-width="1.6"/><circle cx="6.3" cy="6.3" r="4.5" fill="none" stroke="#5b8fd6" stroke-width=".8"/></g><path d="M888.5 72.5l4 2.800-4 2.800z" fill="#8fb0d8" fill-opacity=".8"/><path d="M879.0 71.5h5M881.5 69.0v5M879.0 75.0h5" stroke="#000" stroke-width="1"/><g transform="translate(913.00 78.00)" ><g transform="scale(1.050)"><path d="M0 2.6L5 0l5 2.6-5 2.6z" fill="#c9c9c9" stroke="#444" stroke-width=".5"/><path d="M0 2.6v5.6l5 2.6V5.2z" fill="#9a9a9a" stroke="#444" stroke-width=".5"/><path d="M10 2.6v5.6l-5 2.6V5.2z" fill="#5f5f5f" stroke="#444" stroke-width=".5"/></g></g><path d="M912.0 80.0l-7 7" stroke="#c8c8c8" stroke-width="2.400" stroke-linecap="round"/><g transform="translate(908.50 69.00)" ><circle cx="6.3" cy="6.3" r="5.3" fill="#b9d4f4" stroke="#d6dde8" stroke-width="1.6"/><circle cx="6.3" cy="6.3" r="4.5" fill="none" stroke="#5b8fd6" stroke-width=".8"/></g><path d="M913.5 72.5l4 2.800-4 2.800z" fill="#8fb0d8" fill-opacity=".8"/><g transform="translate(906.00 71.00)" ><rect x="-2.2" y="-2.2" width="4.400" height="4.400" fill="#2fb52f"/><path d="M-1.2 -1.2l2.400 2.400m0-2.400l-2.400 2.400" stroke="#1f8a1f" stroke-width=".6"/><rect x="14.3" y="-2.2" width="4.400" height="4.400" fill="#2fb52f"/><path d="M15.3 -1.2l2.400 2.400m0-2.400l-2.400 2.400" stroke="#1f8a1f" stroke-width=".6"/><rect x="-2.2" y="12.8" width="4.400" height="4.400" fill="#2fb52f"/><path d="M-1.2 13.8l2.400 2.400m0-2.400l-2.400 2.400" stroke="#1f8a1f" stroke-width=".6"/><rect x="14.3" y="12.8" width="4.400" height="4.400" fill="#2fb52f"/><path d="M15.3 13.8l2.400 2.400m0-2.400l-2.400 2.400" stroke="#1f8a1f" stroke-width=".6"/></g><rect x="934.500" y="73.500" width="13.500" height="10" fill="#e6ecfa" stroke="#333" stroke-width="1"/><text x="941.200" y="82.200" font-size="9.500" font-weight="bold" text-anchor="middle" fill="#301878" font-family="Liberation Sans,sans-serif">1:1</text><g transform="translate(934.00 72.00)" ><rect x="-2.2" y="-2.2" width="4.400" height="4.400" fill="#2fb52f"/><path d="M-1.2 -1.2l2.400 2.400m0-2.400l-2.400 2.400" stroke="#1f8a1f" stroke-width=".6"/><rect x="12.3" y="-2.2" width="4.400" height="4.400" fill="#2fb52f"/><path d="M13.3 -1.2l2.400 2.400m0-2.400l-2.400 2.400" stroke="#1f8a1f" stroke-width=".6"/><rect x="-2.2" y="11.3" width="4.400" height="4.400" fill="#2fb52f"/><path d="M-1.2 12.3l2.400 2.400m0-2.400l-2.400 2.400" stroke="#1f8a1f" stroke-width=".6"/><rect x="12.3" y="11.3" width="4.400" height="4.400" fill="#2fb52f"/><path d="M13.3 12.3l2.400 2.400m0-2.400l-2.400 2.400" stroke="#1f8a1f" stroke-width=".6"/></g><path d="M962 85l11-11.500" stroke="#3cc43c" stroke-width="2.200"/><path d="M976 69.500l-6.500 1.500 5 5z" fill="#3cc43c" stroke="#1a8a1a" stroke-width=".4"/><circle cx="961.500" cy="84.500" r="3" fill="url(#gball)" stroke="#333" stroke-width=".5"/><g transform="translate(984.00 68.00)" ><g transform="translate(19.500 0) rotate(90) scale(1.4 1.3)"><path d="M1.5 5.5 Q2.5 0.8 8 0.8 Q12 1 13 3.4 L14.6 1.6 L14.8 7 L9.6 6.4 L11.3 4.9 Q10 3.2 7.8 3.2 Q4.5 3.3 4 5.8z" fill="#3cc43c" stroke="#1a8a1a" stroke-width=".5"/><path d="M13.4 7.6 Q12.6 12.2 7 12.2 Q3 12 2 9.6 L0.4 11.4 L0.2 6 L5.4 6.6 L3.7 8.1 Q5 9.8 7.2 9.8 Q10.5 9.7 11 7.2z" fill="#3cc43c" stroke="#1a8a1a" stroke-width=".5"/></g></g><g transform="translate(1009.00 68.50)" ><g transform="scale(1.000)"><path d="M0.4 8 Q4.500 2.200 10.500 1.500 Q16.500 1.200 19.600 5.200 Q16.500 8.300 11 8.900 Q5 9.200 0.400 8z" fill="#a9c2ef"/><circle cx="9.800" cy="5" r="3.700" fill="#3f5486"/><circle cx="9.800" cy="5" r="1.600" fill="#151c38"/><circle cx="8.700" cy="3.900" r=".9" fill="#a9c2ef"/><path d="M0.200 8.300 Q4.200 1.600 10.500 0.500 Q17 0.100 19.900 5.300 Q16.600 2.700 10.600 3 Q5 3.500 1.300 8.500z" fill="#1b2340"/><path d="M0.400 8.100 Q5 9.600 11 9 Q16.400 8.300 19.600 5.200" stroke="#8a7494" stroke-width=".5" fill="none"/><path d="M5 2.400l-.9-1.400M8 1.300l-.4-1.400M11 .9l.3-1.200M14 1.200l.9-1.200M17 2.300l1.300-1" stroke="#1b2340" stroke-width=".8"/></g></g><circle cx="1018.500" cy="81.500" r="6" fill="url(#gsmile)" stroke="#d89a18" stroke-width=".5"/><circle cx="1016.500" cy="79.500" r=".9" fill="#333"/><circle cx="1020.500" cy="79.500" r=".9" fill="#333"/><path d="M1015 83q3.500 2.500 7 0" stroke="#a86a10" stroke-width=".8" fill="none"/><g transform="translate(1052.00 68.00)" ><path d="M0.500 9.500L9.500 4l10 4.500v3L11 18.500 0.500 12.500z" fill="#dde7fb" stroke="#a9b6d6" stroke-width=".6"/><path d="M5.500 12V3" stroke="#1e6cf0" stroke-width="2"/><path d="M5.500 -0.500l-3 4.600h6z" fill="#1e6cf0"/><path d="M5.500 12l8-5.500" stroke="#2fb52f" stroke-width="1.900"/><path d="M16.500 4.400l-5.200.6 2.600 3.800z" fill="#2fb52f"/><path d="M5.500 12l7 5.500" stroke="#e02020" stroke-width="1.900"/><path d="M15.200 19.600l-5-.9 2.600-3.400z" fill="#e02020"/><circle cx="5.500" cy="12" r="2" fill="url(#gball)" stroke="#444" stroke-width=".4"/></g><g transform="translate(1084.00 67.50)" ><g transform="scale(.72)"><path d="M0.500 9.500L9.500 4l10 4.500v3L11 18.500 0.500 12.500z" fill="#dde7fb" stroke="#a9b6d6" stroke-width=".6"/><path d="M5.500 12V3" stroke="#1e6cf0" stroke-width="2"/><path d="M5.500 -0.500l-3 4.600h6z" fill="#1e6cf0"/><path d="M5.500 12l8-5.500" stroke="#2fb52f" stroke-width="1.900"/><path d="M16.500 4.400l-5.200.6 2.600 3.800z" fill="#2fb52f"/><path d="M5.500 12l7 5.500" stroke="#e02020" stroke-width="1.900"/><path d="M15.200 19.600l-5-.9 2.600-3.400z" fill="#e02020"/><circle cx="5.500" cy="12" r="2" fill="url(#gball)" stroke="#444" stroke-width=".4"/></g></g><path d="M1080 86l7.500-7.500-2.500-2 7-1-1 7-2-2.200-7 7.200z" fill="#2fb52f" stroke="#157815" stroke-width=".6"/><rect x="1088.500" y="83.500" width="8" height="4" fill="#e4e4e4" stroke="#888" stroke-width="1"/><circle cx="1081.500" cy="86" r="1.800" fill="#c0c0c0" stroke="#777" stroke-width=".5"/><g transform="translate(1109.00 67.50)" ><g transform="scale(.76)"><path d="M0.500 9.500L9.500 4l10 4.500v3L11 18.500 0.500 12.500z" fill="#dde7fb" stroke="#a9b6d6" stroke-width=".6"/><path d="M5.500 12V3" stroke="#1e6cf0" stroke-width="2"/><path d="M5.500 -0.500l-3 4.600h6z" fill="#1e6cf0"/><path d="M5.500 12l8-5.500" stroke="#2fb52f" stroke-width="1.900"/><path d="M16.500 4.400l-5.200.6 2.600 3.800z" fill="#2fb52f"/><path d="M5.500 12l7 5.500" stroke="#e02020" stroke-width="1.900"/><path d="M15.200 19.600l-5-.9 2.600-3.400z" fill="#e02020"/><circle cx="5.500" cy="12" r="2" fill="url(#gball)" stroke="#444" stroke-width=".4"/></g></g><path d="M1104 78l3.500-3.500 1.500 1.500 2-2 3 3-2 2 1.500 1.500-3.500 3.500 0-2.500-2.500 2.500 0 0z" fill="#2fb52f" stroke="#157815" stroke-width=".6"/><path d="M1105 80.500l5 5.500M1104.500 84l4 4h3.500" stroke="#2fb52f" stroke-width="2" fill="none"/><rect x="1147.5" y="69.5" width="6" height="6" fill="#10d0f0"/><rect x="1154.2" y="69.5" width="6" height="6" fill="#f8d800"/><rect x="1160.9" y="69.5" width="6" height="6" fill="#10e810"/><rect x="1147.5" y="76.2" width="6" height="6" fill="#f88a00"/><rect x="1154.2" y="76.2" width="6" height="6" fill="#a86400"/><rect x="1160.9" y="76.2" width="6" height="6" fill="#f010e0"/><rect x="1147.5" y="82.9" width="6" height="6" fill="#1010e8"/><rect x="1154.2" y="82.9" width="6" height="6" fill="#10a830"/><rect x="1160.9" y="82.9" width="6" height="6" fill="#808080"/><rect x="1175.500" y="68.500" width="15" height="20" fill="#dce8fa" stroke="#7a8498" stroke-width="1"/><rect x="1177.500" y="70.500" width="11" height="1.800" fill="#6aa0e8"/><path d="M1177.500 74h3M1185.500 74h3" stroke="#f0b040" stroke-width="1"/><path d="M1177.500 76.500h11" stroke="#7ad07a" stroke-width="1.200"/><rect x="1178.5" y="78.5" width="2.500" height="2.500" fill="#10d0f0"/><rect x="1181.7" y="78.5" width="2.500" height="2.500" fill="#f8d800"/><rect x="1184.9" y="78.5" width="2.500" height="2.500" fill="#10e810"/><rect x="1178.5" y="81.5" width="2.500" height="2.500" fill="#f88a00"/><rect x="1181.7" y="81.5" width="2.500" height="2.500" fill="#a86400"/><rect x="1184.9" y="81.5" width="2.500" height="2.500" fill="#f010e0"/><rect x="1178.5" y="84.5" width="2.500" height="2.500" fill="#1010e8"/><rect x="1181.7" y="84.5" width="2.500" height="2.500" fill="#10a830"/><rect x="1184.9" y="84.5" width="2.500" height="2.500" fill="#808080"/><circle cx="1209" cy="78.500" r="10" fill="#6a9a4a" stroke="#4a6a3a" stroke-width="1.400"/><g transform="translate(1201.50 71.00)" ><g transform="scale(1.08)"><path d="M2.500 2.500l6 6" stroke="#d4d8e0" stroke-width="1.500" stroke-linecap="round"/><path d="M8 8l4 4" stroke="#4a86dc" stroke-width="3.200" stroke-linecap="round"/><path d="M2 12.400l7.400-7.400" stroke="#e8e8e8" stroke-width="2.300" stroke-linecap="round"/><path d="M12.900 2.200a2.700 2.700 0 1 1-2.400-1.500" stroke="#e8e8e8" stroke-width="1.700" fill="none"/></g></g><ellipse cx="1209.500" cy="85" rx="2.600" ry="2" fill="#bdbdbd"/><rect x="1225.500" y="68.500" width="19" height="20" fill="#cfe0f8" stroke="#42588a" stroke-width="1"/><rect x="1225.500" y="68.500" width="19" height="3.500" fill="#3a68b8"/><path d="M1229 74h13" stroke="#a8b830" stroke-width="2" stroke-dasharray="2.200 1"/><path d="M1227.500 76v11" stroke="#a85a20" stroke-width="1.600" stroke-dasharray="2 1"/><g transform="translate(1230.00 75.50)" ><g transform="scale(.9)"><path d="M2.500 2.500l6 6" stroke="#d4d8e0" stroke-width="1.500" stroke-linecap="round"/><path d="M8 8l4 4" stroke="#4a86dc" stroke-width="3.200" stroke-linecap="round"/><path d="M2 12.400l7.400-7.400" stroke="#d8dce4" stroke-width="2.300" stroke-linecap="round"/><path d="M12.900 2.200a2.700 2.700 0 1 1-2.400-1.500" stroke="#d8dce4" stroke-width="1.700" fill="none"/></g></g><path d="M1253.5 68.5v3M1252.0 70.0h3" stroke="#1a3a80" stroke-width="1"/><path d="M1253.5 74.1v3M1252.0 75.6h3" stroke="#1a3a80" stroke-width="1"/><path d="M1253.5 79.7v3M1252.0 81.2h3" stroke="#1a3a80" stroke-width="1"/><path d="M1253.5 85.3v3M1252.0 86.8h3" stroke="#1a3a80" stroke-width="1"/><path d="M1259.1 68.5v3M1257.6 70.0h3" stroke="#1a3a80" stroke-width="1"/><path d="M1259.1 85.3v3M1257.6 86.8h3" stroke="#1a3a80" stroke-width="1"/><path d="M1264.7 68.5v3M1263.2 70.0h3" stroke="#1a3a80" stroke-width="1"/><path d="M1264.7 85.3v3M1263.2 86.8h3" stroke="#1a3a80" stroke-width="1"/><path d="M1270.3 68.5v3M1268.8 70.0h3" stroke="#1a3a80" stroke-width="1"/><path d="M1270.3 74.1v3M1268.8 75.6h3" stroke="#1a3a80" stroke-width="1"/><path d="M1270.3 79.7v3M1268.8 81.2h3" stroke="#1a3a80" stroke-width="1"/><path d="M1270.3 85.3v3M1268.8 86.8h3" stroke="#1a3a80" stroke-width="1"/><path d="M1258 79l6-7.500 7.500-1.500v6l-5 .5-2 1.500-2.500 4z" fill="#e8b878" stroke="#9a6a30" stroke-width=".7"/><circle cx="1256.500" cy="83" r="3" fill="#f0e020" fill-opacity=".8" stroke="#c8b400" stroke-width=".5"/><path d="M1254.500 83h4M1256.500 81v4" stroke="#1a3ad0" stroke-width="1.200"/><path d="M1278.500 86.500l5-15 13-2-4.500 15z" fill="#e86a6a" stroke="#2a58c8" stroke-width="1.400"/><path d="M1281 80l12.500-2M1282.500 75.500l12.500-2M1286 71.500l-4.500 14M1290 70.500l-4.500 14.500M1293.500 70l-4 14.500" stroke="#f4c0c0" stroke-width=".7"/><path d="M1280 87.500l12.500-2 2.500 1" stroke="#555" stroke-width="1" stroke-opacity=".5" fill="none"/></svg>
<div id="side"><div class="hgrip" style="top:6px"></div><div class="hgrip" style="top:258px"></div></div>
<svg class="ico" style="left:0px;top:0px" width="62" height="400" viewBox="0 0 62 400"><defs><linearGradient id="gb" x1="0" x2="1"><stop offset="0" stop-color="#8fb4ee"/><stop offset=".35" stop-color="#5e86d2"/><stop offset="1" stop-color="#2c4a8e"/></linearGradient><linearGradient id="gl" x1="0" x2="1"><stop offset="0" stop-color="#eaf0fb"/><stop offset="1" stop-color="#b4c6e6"/></linearGradient><linearGradient id="gdoc" x1="0" y1="0" x2="1" y2="1"><stop offset="0" stop-color="#ffffff"/><stop offset="1" stop-color="#a9c4f2"/></linearGradient><linearGradient id="gfold" x1="0" y1="0" x2="0" y2="1"><stop offset="0" stop-color="#fbe39a"/><stop offset="1" stop-color="#e9b94b"/></linearGradient><linearGradient id="ggrey" x1="0" y1="0" x2="0" y2="1"><stop offset="0" stop-color="#c9c9c9"/><stop offset="1" stop-color="#7d7d7d"/></linearGradient><linearGradient id="ggem" x1="0" y1="0" x2="1" y2="1"><stop offset="0" stop-color="#6c9cf0"/><stop offset="1" stop-color="#1c3c94"/></linearGradient><radialGradient id="gsmile" cx=".4" cy=".35" r=".7"><stop offset="0" stop-color="#fff6a0"/><stop offset="1" stop-color="#f0b020"/></radialGradient><radialGradient id="gball" cx=".35" cy=".3" r=".8"><stop offset="0" stop-color="#ffffff"/><stop offset="1" stop-color="#555"/></radialGradient><linearGradient id="ggreen" x1="0" y1="0" x2="1" y2="1"><stop offset="0" stop-color="#8ee060"/><stop offset="1" stop-color="#23a023"/></linearGradient></defs><path d="M17 146l-6 6" stroke="#c4c4c4" stroke-width="2.500" stroke-linecap="round"/><circle cx="15" cy="141" r="4.500" fill="none" stroke="#c0c8d4" stroke-width="1"/><circle cx="17" cy="141" r="4.500" fill="none" stroke="#c0c8d4" stroke-width="1"/><g transform="translate(14.50 134.50)" ><circle cx="6.3" cy="6.3" r="5.3" fill="#b9d4f4" stroke="#d6dde8" stroke-width="1.6"/><circle cx="6.3" cy="6.3" r="4.5" fill="none" stroke="#5b8fd6" stroke-width=".8"/></g><path d="M37 136l11 11M35 135l4 4" stroke="#3a7ae0" stroke-width="1.400"/><path d="M41 135l10 12" stroke="#3a7ae0" stroke-width="1.400"/><g transform="translate(37.00 134.00)" ><path d="M13.500 1.500L3 13" stroke="#d89a38" stroke-width="3"/><path d="M12.500 0.800L2.500 12" stroke="#8a5a18" stroke-width=".6"/><path d="M14.500 0.500l-2 2.300" stroke="#e03030" stroke-width="3"/><path d="M3.600 12.400L1 15l3.800-1.200z" fill="#f0d8a8" stroke="#6a4a1a" stroke-width=".5"/><ellipse cx="7" cy="15.500" rx="6" ry="1.300" fill="#555" fill-opacity=".45"/></g><path d="M48.0 133.0h6l-3 3z" fill="#000"/><rect x="11.5" y="165.5" width="13" height="10" fill="url(#gl)" stroke="#8a8a8a" stroke-width="1"/><g transform="translate(11.00 163.50)" ><rect x="-2.2" y="-2.2" width="4.400" height="4.400" fill="#2fb52f"/><path d="M-1.2 -1.2l2.400 2.400m0-2.400l-2.400 2.400" stroke="#1f8a1f" stroke-width=".6"/><rect x="11.8" y="-2.2" width="4.400" height="4.400" fill="#2fb52f"/><path d="M12.8 -1.2l2.400 2.400m0-2.400l-2.400 2.400" stroke="#1f8a1f" stroke-width=".6"/><rect x="-2.2" y="11.8" width="4.400" height="4.400" fill="#2fb52f"/><path d="M-1.2 12.8l2.400 2.400m0-2.400l-2.400 2.400" stroke="#1f8a1f" stroke-width=".6"/><rect x="11.8" y="11.8" width="4.400" height="4.400" fill="#2fb52f"/><path d="M12.8 12.8l2.400 2.400m0-2.400l-2.400 2.400" stroke="#1f8a1f" stroke-width=".6"/></g><path d="M41 163c-5-2-8 1-6 4.500 2 3.500 8 2.500 12 5 3 2 1 6.500-3 5.500-3-.8-4-3.500-2.500-6" stroke="#3a7ae0" stroke-width="1.500" fill="none"/><g transform="translate(37.00 160.00)" ><path d="M13.500 1.500L3 13" stroke="#d89a38" stroke-width="3"/><path d="M12.500 0.800L2.500 12" stroke="#8a5a18" stroke-width=".6"/><path d="M14.500 0.500l-2 2.300" stroke="#e03030" stroke-width="3"/><path d="M3.600 12.400L1 15l3.800-1.200z" fill="#f0d8a8" stroke="#6a4a1a" stroke-width=".5"/><ellipse cx="7" cy="15.500" rx="6" ry="1.300" fill="#555" fill-opacity=".45"/></g><path d="M48.0 159.0h6l-3 3z" fill="#000"/><g transform="translate(16.50 196.00)" ><g transform="scale(1.000)"><path d="M0 2.6L5 0l5 2.6-5 2.6z" fill="#c9c9c9" stroke="#444" stroke-width=".5"/><path d="M0 2.6v5.6l5 2.6V5.2z" fill="#9a9a9a" stroke="#444" stroke-width=".5"/><path d="M10 2.6v5.6l-5 2.6V5.2z" fill="#5f5f5f" stroke="#444" stroke-width=".5"/></g></g><path d="M15.0 197.5l-7 7" stroke="#c8c8c8" stroke-width="2.400" stroke-linecap="round"/><g transform="translate(12.00 187.00)" ><circle cx="6.0" cy="6.0" r="5.0" fill="#b9d4f4" stroke="#d6dde8" stroke-width="1.6"/><circle cx="6.0" cy="6.0" r="4.2" fill="none" stroke="#5b8fd6" stroke-width=".8"/></g><path d="M16.8 190.2l4 2.800-4 2.800z" fill="#8fb0d8" fill-opacity=".8"/><path d="M7.0 189.5h5M9.5 187.0v5M7.0 192.5h5" stroke="#000" stroke-width="1"/><path d="M22.0 185.0h6l-3 3z" fill="#000"/><path d="M36.0 188.5h15v8h-3v3.500h1.500v4.500H36.0z" fill="#f2f2e8" stroke="#f0e800" stroke-width="1.800"/><path d="M39.5 196.0l3.500 4.500 6.500-9.500" stroke="#3cc03c" stroke-width="3" fill="none" stroke-linecap="round" stroke-linejoin="round"/><path d="M48.0 185.0h6l-3 3z" fill="#000"/><g transform="translate(7.00 211.00)" ><path d="M0.500 9.500L9.500 4l10 4.500v3L11 18.500 0.500 12.500z" fill="#dde7fb" stroke="#a9b6d6" stroke-width=".6"/><path d="M5.500 12V3" stroke="#1e6cf0" stroke-width="2"/><path d="M5.500 -0.500l-3 4.600h6z" fill="#1e6cf0"/><path d="M5.500 12l8-5.500" stroke="#2fb52f" stroke-width="1.900"/><path d="M16.500 4.400l-5.200.6 2.600 3.800z" fill="#2fb52f"/><path d="M5.500 12l7 5.500" stroke="#e02020" stroke-width="1.900"/><path d="M15.200 19.600l-5-.9 2.600-3.400z" fill="#e02020"/><circle cx="5.500" cy="12" r="2" fill="url(#gball)" stroke="#444" stroke-width=".4"/></g><path d="M22.0 211.0h6l-3 3z" fill="#000"/><path d="M36 226c-1-12 5-16 8-6 2 7 4 12 7.500 8 1.500-2 1.500-5 1-7" stroke="#3a7ae0" stroke-width="1.500" fill="none"/><g transform="translate(37.00 212.00)" ><path d="M13.500 1.500L3 13" stroke="#d89a38" stroke-width="3"/><path d="M12.500 0.800L2.500 12" stroke="#8a5a18" stroke-width=".6"/><path d="M14.500 0.500l-2 2.300" stroke="#e03030" stroke-width="3"/><path d="M3.600 12.400L1 15l3.800-1.200z" fill="#f0d8a8" stroke="#6a4a1a" stroke-width=".5"/><ellipse cx="7" cy="15.500" rx="6" ry="1.300" fill="#555" fill-opacity=".45"/></g><path d="M48.0 211.0h6l-3 3z" fill="#000"/><g transform="translate(8.00 238.00)" ><path d="M0.500 1.500h10l3 2.500h-10z" fill="#8f9cf4" stroke="#6a78d8" stroke-width=".5"/><path d="M0.500 4.500h10l3 2.500h-10z" fill="#e6e8f2" stroke="#9a9aa8" stroke-width=".5"/><path d="M0.500 7.500h10l3 2.500h-10z" fill="#dcdcdc" stroke="#8a8a8a" stroke-width=".5"/><ellipse cx="10.500" cy="14.500" rx="7" ry="4.500" fill="#c9a58e" stroke="#7a5a48" stroke-width=".8"/><circle cx="7.500" cy="16" r="1.900" fill="#1c4cf0"/><circle cx="12" cy="16" r="1.900" fill="#18b828"/><circle cx="13.500" cy="13" r="1.800" fill="#e02020"/><path d="M18 0L10 12" stroke="#b86820" stroke-width="1.600"/><path d="M11 10.500l-2.500 4" stroke="#ddd" stroke-width="1.800"/></g><path d="M22.0 237.0h6l-3 3z" fill="#000"/><path d="M35.5 256.0l5.500-14 11.500-2-4 14z" fill="#cfe4fa" stroke="#2a6ae8" stroke-width="1.700" stroke-linejoin="round"/><path d="M38.0 249.5l12-2M46.5 241.0l-4.500 14" stroke="#2a6ae8" stroke-width="1.200"/><path d="M48.0 237.0h6l-3 3z" fill="#000"/><g transform="translate(8.50 265.00)" ><g transform="scale(1.18 1.45)"><path d="M1.5 5.5 Q2.5 0.8 8 0.8 Q12 1 13 3.4 L14.6 1.6 L14.8 7 L9.6 6.4 L11.3 4.9 Q10 3.2 7.8 3.2 Q4.5 3.3 4 5.8z" fill="#7aa8e2" stroke="#4a7cc0" stroke-width=".5"/><path d="M13.4 7.6 Q12.6 12.2 7 12.2 Q3 12 2 9.6 L0.4 11.4 L0.2 6 L5.4 6.6 L3.7 8.1 Q5 9.8 7.2 9.8 Q10.5 9.7 11 7.2z" fill="#6a9ad8" stroke="#4a7cc0" stroke-width=".5"/></g></g><path d="M22.0 263.0h6l-3 3z" fill="#000"/><g transform="translate(35.00 265.50)" ><g transform="scale(1.550)"><path d="M0 2.6L5 0l5 2.6-5 2.6z" fill="#c9c9c9" stroke="#444" stroke-width=".5"/><path d="M0 2.6v5.6l5 2.6V5.2z" fill="#9a9a9a" stroke="#444" stroke-width=".5"/><path d="M10 2.6v5.6l-5 2.6V5.2z" fill="#5f5f5f" stroke="#444" stroke-width=".5"/></g></g><path d="M48.0 263.0h6l-3 3z" fill="#000"/><ellipse cx="17" cy="306.5" rx="7" ry="1.800" fill="#777" fill-opacity=".4"/><text x="17" y="306" font-size="19" font-weight="bold" fill="#4a78c8" stroke="#2a4a90" stroke-width=".5" text-anchor="middle" font-family="Liberation Sans,sans-serif">?</text><path d="M22.0 289.0h6l-3 3z" fill="#000"/><path d="M36.0 293.0v14M51.0 293.0v14" stroke="#777" stroke-width="1.600"/><path d="M38.0 295.0h11" stroke="#e8e000" stroke-width="1.800"/><path d="M36.5 295.0l3.500-2.500v5zM50.5 295.0l-3.500-2.500v5z" fill="#e8e000"/><path d="M48.0 289.0h6l-3 3z" fill="#000"/><ellipse cx="18" cy="333.0" rx="7.500" ry="1.800" fill="#666" fill-opacity=".45"/><path d="M10.5 320.0h13l-1.800 13.500h-9.400z" fill="#a8c8e8" stroke="#4a6a90" stroke-width=".9"/><ellipse cx="17.0" cy="320.0" rx="7.200" ry="2" fill="#7a98c0" stroke="#4a6a90" stroke-width=".8"/><path d="M15.0 320.0l2-3 2 3z" fill="#f0e020"/><path d="M15.0 323.5l4 4-4 4m4-8l-4 4 4 4" stroke="#d8f0a0" stroke-width="1" fill="none"/><path d="M22.0 315.0h6l-3 3z" fill="#000"/><g transform="translate(35.00 317.00)" ><ellipse cx="8.5" cy="15" rx="7.5" ry="1.6" fill="#8a8a8a" fill-opacity=".35"/><path d="M7.4 0.6L0.4 6.4l7 4.4V8.2c3-.2 4.8 1.2 4.2 3.6-.3 1.2-1.3 2.2-2.6 3 4.2-.8 6.6-3.400 6-6.600C14.400 5 11.400 3.600 7.400 3.700z" fill="#b4b4b4" stroke="#8c8c8c" stroke-width=".5"/></g><path d="M48.0 315.0h6l-3 3z" fill="#000"/><rect x="7.5" y="343.0" width="3.500" height="14" fill="#8a8a8a" stroke="#333" stroke-width=".6"/><path d="M9.3 347.0v10" stroke="#e0a020" stroke-width="1"/><circle cx="17.5" cy="351.5" r="5.500" fill="none" stroke="#9a5a3a" stroke-width="1.300"/><path d="M17.5 343.0v17M9.0 351.5h17M11.5 345.5l12 12M23.5 345.5l-12 12" stroke="#9a5a3a" stroke-width="1"/><circle cx="17.5" cy="351.5" r="1.800" fill="#f8c020"/><path d="M8.0 359.0l6-2.500 10-1.500-5 4.500z" fill="#f08a20"/><path d="M10.0 359.5l12-4M12.0 360.2l12-4" stroke="#fff0d0" stroke-width=".6"/><path d="M22.0 341.0h6l-3 3z" fill="#000"/><path d="M38.5 346.5h11l3 3v11h-14z" fill="url(#gdoc)" stroke="#000" stroke-width="1.300"/><rect x="41.0" y="355.5" width="6" height="4" fill="#fff" stroke="#555" stroke-width=".5"/><path d="M35.0 355.0l1-10 5-1.500 1 1.500 7-1-2 12z" fill="url(#gfold)" stroke="#c8962a" stroke-width=".6"/><path d="M40.0 346.5c1-3 4-3.500 6-2l1-1.500 1.500 4.500-4.500.2 1-1.400c-1.500-1-3-.5-3.500 1z" fill="#2fae2f" stroke="#1a7a1a" stroke-width=".4"/></svg>
<div id="view">
<svg style="position:absolute;left:0;top:0" width="1860" height="892" viewBox="60 109 1860 892"><defs>
<linearGradient id="mh" x1="0" x2="1"><stop offset="0" stop-color="#b9bacb"/><stop offset=".3" stop-color="#c9cadc"/><stop offset=".72" stop-color="#8e8f9e"/><stop offset="1" stop-color="#5c5d69"/></linearGradient>
<linearGradient id="mpole" x1="0" x2="1"><stop offset="0" stop-color="#9d9eae"/><stop offset=".4" stop-color="#d2d3e4"/><stop offset="1" stop-color="#8d8e9d"/></linearGradient>
<linearGradient id="mroll" x1="0" y1="0" x2="0" y2="1"><stop offset="0" stop-color="#9e9fae"/><stop offset=".3" stop-color="#b4b5c5"/><stop offset=".75" stop-color="#70717e"/><stop offset="1" stop-color="#4d4e59"/></linearGradient>
<linearGradient id="mhole" x1="0" x2="1"><stop offset="0" stop-color="#5d5e6a"/><stop offset=".5" stop-color="#a4a5b5"/><stop offset="1" stop-color="#c9cadc"/></linearGradient>
<linearGradient id="mplate" x1="0" x2="1"><stop offset="0" stop-color="#adaebf"/><stop offset="1" stop-color="#9fa0b0"/></linearGradient>
<linearGradient id="mlogo" x1="0" y1="0" x2="1" y2="1"><stop offset="0" stop-color="#f06a18"/><stop offset="1" stop-color="#f3a81c"/></linearGradient>
<linearGradient id="mrod" x1="0" y1="0" x2="0" y2="1"><stop offset="0" stop-color="#d8d9e6"/><stop offset="1" stop-color="#6b6c78"/></linearGradient>
</defs><polygon points="651.5,286.0 664.0,286.0 658.5,383.0 646.7,383.0" fill="url(#mpole)" stroke="none" stroke-width="0" stroke-linejoin="round" /><polygon points="636.0,217.0 692.0,208.8 699.3,212.0 646.0,217.6" fill="#a9aabb" stroke="#15151c" stroke-width="0.5" stroke-linejoin="round" /><polygon points="636.0,217.0 646.0,217.6 641.4,287.6 621.4,281.0 622.5,262.0" fill="#cbccde" stroke="#15151c" stroke-width="0.5" stroke-linejoin="round" /><polygon points="646.0,217.6 699.3,212.0 696.0,282.0 641.4,287.6" fill="#8b8c9a" stroke="#15151c" stroke-width="0.6" stroke-linejoin="round" /><line x1="685.0" y1="283.0" x2="682.8" y2="328.0" stroke="#12a4b4" stroke-width="1.6"/><line x1="664.0" y1="332.8" x2="681.0" y2="331.5" stroke="#c81414" stroke-width="2"/><ellipse cx="662.5" cy="333.0" rx="2.2" ry="3.0" fill="#d81818" stroke="none" stroke-width="0" /><rect x="679.0" y="329.0" width="5.0" height="4.0" fill="#9a9aa6" stroke="none" stroke-width="0"/><line x1="684.0" y1="332.5" x2="696.0" y2="336.5" stroke="#28b828" stroke-width="1.6"/><path d="M644 331l6 8M644 338l4-3.500" stroke="#b8b8c4" stroke-width=".8"/><polygon points="826.0,483.6 864.0,476.0 863.3,497.4" fill="#ebebeb" stroke="#15151c" stroke-width="0.4" stroke-linejoin="round" /><polygon points="864.0,476.0 889.2,472.2 888.4,494.0 863.5,497.6" fill="#818189" stroke="#15151c" stroke-width="0.4" stroke-linejoin="round" /><polygon points="706.0,469.0 720.0,473.0 720.0,477.0 706.0,474.0" fill="#7c7d8a" stroke="#15151c" stroke-width="0.4" stroke-linejoin="round" /><polygon points="770.0,485.0 785.0,486.0 783.0,490.0 772.0,489.0" fill="#55565f" stroke="none" stroke-width="0" stroke-linejoin="round" /><polygon points="653.5,450.0 764.0,483.2 977.7,456.8 870.6,421.0 760.0,400.0 676.0,414.0" fill="url(#mplate)" stroke="#15151c" stroke-width="0.5" stroke-linejoin="round" /><polygon points="653.5,450.0 764.0,483.2 764.0,488.3 653.5,454.0" fill="#c9cadc" stroke="#15151c" stroke-width="0.4" stroke-linejoin="round" /><polygon points="764.0,483.2 977.7,456.8 977.7,461.8 764.0,488.3" fill="#62636f" stroke="#15151c" stroke-width="0.4" stroke-linejoin="round" /><ellipse cx="683.0" cy="453.0" rx="3.0" ry="1.0" fill="#33343c" stroke="none" stroke-width="0" /><ellipse cx="742.0" cy="471.5" rx="3.0" ry="1.0" fill="#33343c" stroke="none" stroke-width="0" /><ellipse cx="790.0" cy="475.5" rx="2.5" ry="1.0" fill="#33343c" stroke="none" stroke-width="0" /><ellipse cx="776.0" cy="446.0" rx="4.5" ry="1.0" fill="#33343c" stroke="none" stroke-width="0" /><ellipse cx="787.0" cy="451.0" rx="4.5" ry="1.0" fill="#33343c" stroke="none" stroke-width="0" /><ellipse cx="786.0" cy="458.0" rx="4.0" ry="1.0" fill="#33343c" stroke="none" stroke-width="0" /><ellipse cx="885.5" cy="429.5" rx="2.5" ry="1.0" fill="#33343c" stroke="none" stroke-width="0" /><ellipse cx="942.0" cy="447.0" rx="2.5" ry="1.0" fill="#33343c" stroke="none" stroke-width="0" /><ellipse cx="937.0" cy="459.0" rx="2.5" ry="1.0" fill="#33343c" stroke="none" stroke-width="0" /><ellipse cx="863.0" cy="467.0" rx="2.2" ry="1.0" fill="#33343c" stroke="none" stroke-width="0" /><ellipse cx="677.0" cy="423.0" rx="5.0" ry="1.0" fill="#33343c" stroke="none" stroke-width="0" /><polygon points="827.5,204.0 833.5,202.0 832.5,250.0 826.5,268.0 823.0,283.0 813.5,307.0 810.5,307.0 817.5,264.0 823.0,236.0" fill="#040406" stroke="none" stroke-width="0" stroke-linejoin="round" /><polygon points="812.0,201.5 817.2,201.5 817.0,264.0 811.3,264.0" fill="#c6c7d9" stroke="#15151c" stroke-width="0.6" stroke-linejoin="round" /><polygon points="818.7,202.0 823.8,202.0 823.4,214.0 818.7,214.0" fill="#bdbecf" stroke="#15151c" stroke-width="0.6" stroke-linejoin="round" /><polygon points="812.6,192.0 816.0,189.5 827.5,189.5 828.0,200.5 823.0,202.0 812.6,201.5" fill="#bfc0d1" stroke="#15151c" stroke-width="0.7" stroke-linejoin="round" /><line x1="816.0" y1="193.5" x2="826.0" y2="193.5" stroke="#15151c" stroke-width="0.6"/><line x1="815.0" y1="197.0" x2="826.0" y2="197.0" stroke="#15151c" stroke-width="0.6"/><rect x="811.0" y="260.7" width="6.0" height="3.6" fill="#d0d1e0" stroke="#15151c" stroke-width="0.5"/><polygon points="826.4,283.0 832.4,283.0 832.4,307.0 826.4,307.0" fill="#b9bacb" stroke="#15151c" stroke-width="0.5" stroke-linejoin="round" /><polygon points="835.0,196.0 841.0,196.0 836.3,278.0 831.5,278.0" fill="#c6c7d9" stroke="#15151c" stroke-width="0.5" stroke-linejoin="round" /><polygon points="841.0,196.0 846.0,187.5 845.6,205.0 841.0,270.0 836.3,278.0" fill="#6c6d7b" stroke="#15151c" stroke-width="0.4" stroke-linejoin="round" /><polygon points="835.0,196.0 840.0,187.5 846.0,187.5 841.0,196.0" fill="#a9aabb" stroke="#15151c" stroke-width="0.4" stroke-linejoin="round" /><rect x="828.0" y="276.0" width="8.0" height="3.6" fill="#e4e5f0" stroke="#15151c" stroke-width="0.4"/><polygon points="841.0,260.0 845.0,259.0 845.0,266.0 841.0,268.0" fill="#a9aabb" stroke="#15151c" stroke-width="0.4" stroke-linejoin="round" /><polygon points="841.8,266.0 847.9,264.2 847.9,276.2 843.6,279.6 839.3,322.6 833.3,321.0 835.0,283.0 839.3,278.0" fill="#5c10c6" stroke="none" stroke-width="0" stroke-linejoin="round" /><polygon points="841.8,279.6 846.1,324.3 839.3,324.3" fill="#12d6e6" stroke="none" stroke-width="0" stroke-linejoin="round" /><polygon points="849.6,266.0 855.6,323.5 847.9,324.3" fill="#12d6e6" stroke="none" stroke-width="0" stroke-linejoin="round" /><polygon points="843.0,360.0 857.0,362.0 856.0,368.0 842.0,367.0" fill="#12d6ea" stroke="none" stroke-width="0" stroke-linejoin="round" /><polygon points="852.0,384.0 860.0,385.0 859.0,394.0 852.0,393.0" fill="#12d6ea" stroke="none" stroke-width="0" stroke-linejoin="round" /><polygon points="792.0,304.0 833.0,304.0 833.0,316.0 786.0,318.0" fill="#aeafc0" stroke="#15151c" stroke-width="0.5" stroke-linejoin="round" /><polygon points="786.0,318.0 833.0,314.0 836.0,348.0 788.0,348.0" fill="#c6c7d9" stroke="#15151c" stroke-width="0.5" stroke-linejoin="round" /><polygon points="792.0,304.0 808.0,300.0 812.0,304.0 808.0,310.0 792.0,311.0" fill="#9d9eae" stroke="#15151c" stroke-width="0.4" stroke-linejoin="round" /><rect x="789.5" y="322.0" width="1.6" height="5.0" fill="#2a2a33" stroke="none" stroke-width="0"/><rect x="797.0" y="320.0" width="1.6" height="5.0" fill="#2a2a33" stroke="none" stroke-width="0"/><rect x="789.5" y="336.0" width="1.6" height="5.0" fill="#2a2a33" stroke="none" stroke-width="0"/><rect x="797.0" y="336.0" width="1.6" height="5.0" fill="#2a2a33" stroke="none" stroke-width="0"/><polygon points="833.0,376.0 944.4,363.5 944.4,373.0 833.0,388.0" fill="#70717e" stroke="#15151c" stroke-width="0.4" stroke-linejoin="round" /><polygon points="833.0,376.0 851.0,366.0 880.0,372.0 944.4,363.5 936.0,368.0 880.0,377.0 850.0,381.0" fill="#a0a1b1" stroke="#15151c" stroke-width="0.4" stroke-linejoin="round" /><rect x="884.0" y="361.0" width="4.5" height="15.0" fill="#83848f" stroke="#15151c" stroke-width="0.4"/><rect x="940.0" y="352.0" width="4.5" height="20.0" fill="#83848f" stroke="#15151c" stroke-width="0.4"/><polygon points="836.0,369.0 872.0,364.5 880.0,371.5 842.0,377.5" fill="#8d8e9d" stroke="#15151c" stroke-width="0.4" stroke-linejoin="round" /><rect x="857.0" y="372.1" width="2.5" height="2.5" fill="#15151c"/><rect x="849.5" y="368.3" width="2.5" height="1.0" fill="#1e1f27"/><rect x="865.0" y="372.0" width="1.0" height="1.0" fill="#2a2a33"/><rect x="851.6" y="368.9" width="4.0" height="3.0" fill="#15151c"/><rect x="851.2" y="368.8" width="2.0" height="1.0" fill="#15151c"/><rect x="843.2" y="367.1" width="1.0" height="2.5" fill="#15151c"/><rect x="866.5" y="368.2" width="1.0" height="3.0" fill="#15151c"/><rect x="855.1" y="373.8" width="2.5" height="1.0" fill="#1e1f27"/><rect x="863.8" y="372.3" width="1.5" height="1.5" fill="#1e1f27"/><rect x="853.2" y="366.7" width="4.0" height="3.0" fill="#15151c"/><rect x="859.9" y="370.6" width="2.0" height="2.0" fill="#15151c"/><rect x="855.7" y="374.4" width="1.5" height="1.0" fill="#15151c"/><rect x="842.3" y="367.4" width="3.0" height="3.0" fill="#1e1f27"/><rect x="864.4" y="370.7" width="1.0" height="2.5" fill="#15151c"/><rect x="857.9" y="369.5" width="2.0" height="1.5" fill="#15151c"/><rect x="866.1" y="371.4" width="2.0" height="1.0" fill="#1e1f27"/><rect x="860.9" y="370.3" width="2.5" height="1.0" fill="#15151c"/><rect x="863.4" y="366.5" width="1.5" height="3.0" fill="#2a2a33"/><rect x="848.6" y="366.6" width="4.0" height="1.0" fill="#2a2a33"/><rect x="857.0" y="370.6" width="1.5" height="3.0" fill="#1e1f27"/><rect x="869.8" y="368.3" width="2.0" height="2.0" fill="#2a2a33"/><rect x="850.6" y="371.7" width="3.0" height="2.5" fill="#2a2a33"/><rect x="850.0" y="369.3" width="2.0" height="2.0" fill="#15151c"/><rect x="850.4" y="367.6" width="2.5" height="1.0" fill="#15151c"/><rect x="843.1" y="370.0" width="4.0" height="1.0" fill="#15151c"/><rect x="849.1" y="371.1" width="2.5" height="1.0" fill="#15151c"/><rect x="857.0" y="371.5" width="2.0" height="3.0" fill="#1e1f27"/><rect x="848.3" y="369.4" width="1.0" height="3.0" fill="#15151c"/><rect x="861.8" y="373.4" width="2.0" height="2.0" fill="#2a2a33"/><rect x="848.0" y="371.3" width="2.0" height="1.0" fill="#15151c"/><rect x="871.0" y="373.4" width="1.0" height="1.5" fill="#15151c"/><rect x="869.4" y="369.7" width="1.0" height="1.0" fill="#1e1f27"/><rect x="869.4" y="371.3" width="2.5" height="2.5" fill="#15151c"/><rect x="847.5" y="372.0" width="2.5" height="1.0" fill="#1e1f27"/><rect x="841.4" y="371.7" width="2.0" height="1.5" fill="#15151c"/><rect x="857.6" y="367.1" width="1.5" height="1.0" fill="#2a2a33"/><rect x="855.8" y="370.6" width="2.5" height="2.5" fill="#2a2a33"/><rect x="849.3" y="373.0" width="2.5" height="1.0" fill="#15151c"/><rect x="860.3" y="368.6" width="4.0" height="2.5" fill="#15151c"/><rect x="863.9" y="366.6" width="4.0" height="2.5" fill="#1e1f27"/><rect x="841.5" y="367.1" width="1.0" height="1.0" fill="#15151c"/><rect x="868.8" y="372.1" width="1.0" height="1.0" fill="#2a2a33"/><rect x="848.3" y="368.6" width="2.5" height="1.5" fill="#15151c"/><rect x="864.2" y="372.3" width="2.0" height="1.5" fill="#15151c"/><rect x="854.4" y="368.8" width="4.0" height="1.0" fill="#2a2a33"/><rect x="864.3" y="371.7" width="2.5" height="1.5" fill="#2a2a33"/><rect x="855.2" y="367.3" width="2.5" height="2.0" fill="#2a2a33"/><rect x="848.3" y="368.3" width="3.0" height="1.0" fill="#15151c"/><rect x="851.9" y="369.9" width="2.0" height="1.0" fill="#2a2a33"/><rect x="857.7" y="371.8" width="1.0" height="1.5" fill="#2a2a33"/><rect x="865.9" y="368.9" width="1.0" height="1.0" fill="#15151c"/><rect x="859.6" y="369.1" width="4.0" height="1.0" fill="#15151c"/><rect x="868.9" y="370.5" width="2.5" height="2.0" fill="#1e1f27"/><rect x="860.6" y="372.6" width="2.0" height="1.0" fill="#15151c"/><rect x="867.4" y="367.9" width="4.0" height="1.0" fill="#2a2a33"/><rect x="843.3" y="368.8" width="1.0" height="3.0" fill="#15151c"/><rect x="842.8" y="368.2" width="2.5" height="1.5" fill="#1e1f27"/><rect x="869.9" y="366.9" width="2.0" height="1.0" fill="#1e1f27"/><rect x="857.2" y="371.5" width="3.0" height="3.0" fill="#2a2a33"/><rect x="851.3" y="368.0" width="1.0" height="2.5" fill="#15151c"/><polygon points="861.0,383.5 874.0,384.5 892.0,393.5 894.5,413.0 874.0,405.0 861.0,394.0" fill="#587650" stroke="#2c3c2a" stroke-width="0.4" stroke-linejoin="round" /><polygon points="864.0,387.0 880.0,394.0 879.0,400.0 864.0,393.0" fill="#5a5b66" stroke="#15151c" stroke-width="0.4" stroke-linejoin="round" /><ellipse cx="935.8" cy="334.3" rx="14.7" ry="24.8" fill="#cbccde" stroke="#15151c" stroke-width="0.6" /><path d="M898 318.700L935.800 314A11 19.500 0 0 1 935.800 353L898 357.700z" fill="url(#mroll)" stroke="#15151c" stroke-width=".4"/><ellipse cx="948.3" cy="334.5" rx="1.6" ry="3.2" fill="#8c8d9b" stroke="#15151c" stroke-width="0.5" /><polygon points="931.0,356.0 945.0,350.0 945.0,365.0 931.0,368.0" fill="#c6c7d9" stroke="none" stroke-width="0" stroke-linejoin="round" /><ellipse cx="892.8" cy="338.5" rx="12.6" ry="24.2" fill="#c9cadc" stroke="#15151c" stroke-width="0.6" /><ellipse cx="877.0" cy="340.6" rx="14.7" ry="24.2" fill="#c3c4d6" stroke="#15151c" stroke-width="0.6" /><path d="M841.400 325L877 320.500A11 19.500 0 0 1 877 359.500L841.400 363z" fill="url(#mroll)" stroke="#15151c" stroke-width=".4"/><polygon points="873.5,362.5 889.0,360.5 889.0,376.0 873.5,378.0" fill="#c6c7d9" stroke="none" stroke-width="0" stroke-linejoin="round" /><ellipse cx="830.9" cy="343.7" rx="15.7" ry="23.0" fill="#c9cadc" stroke="#15151c" stroke-width="0.6" /><ellipse cx="833.5" cy="350.0" rx="4.5" ry="8.0" fill="#2e2f37" stroke="#15151c" stroke-width="0.5" /><ellipse cx="817.5" cy="347.5" rx="2.8" ry="4.2" fill="#c9cadc" stroke="#15151c" stroke-width="0.5" /><rect x="729.0" y="345.5" width="29.0" height="21.0" fill="#5c5d69" stroke="#15151c" stroke-width="0.9"/><polygon points="741.0,336.5 774.0,335.0 774.0,343.0 741.0,345.0" fill="url(#mrod)" stroke="#15151c" stroke-width="0.9" stroke-linejoin="round" /><rect x="740.5" y="336.0" width="5.0" height="9.5" fill="#c6c7d9" stroke="#15151c" stroke-width="0.9"/><rect x="769.0" y="331.0" width="17.0" height="15.0" fill="#2a2a33" stroke="none" stroke-width="0"/><rect x="771.0" y="333.0" width="5.0" height="4.0" fill="#c9cadc" stroke="none" stroke-width="0"/><rect x="779.0" y="338.0" width="4.0" height="5.0" fill="#c9cadc" stroke="none" stroke-width="0"/><rect x="776.0" y="329.0" width="6.0" height="3.0" fill="#28a828" stroke="none" stroke-width="0"/><polygon points="685.0,336.0 712.0,340.0 713.0,381.0 689.0,378.0" fill="#494a55" stroke="#15151c" stroke-width="0.9" stroke-linejoin="round" /><polygon points="685.0,335.0 712.0,339.5 712.0,344.0 685.0,339.0" fill="#c6c7d9" stroke="#15151c" stroke-width="0.9" stroke-linejoin="round" /><rect x="706.3" y="369.4" width="2.5" height="2.5" fill="#d0d1e0"/><rect x="691.2" y="370.1" width="3.0" height="2.5" fill="#c3c4d6"/><rect x="703.7" y="347.1" width="4.0" height="2.5" fill="#e4e5f0"/><rect x="699.7" y="374.3" width="1.5" height="1.0" fill="#15151c"/><rect x="710.6" y="375.4" width="1.0" height="2.5" fill="#15151c"/><rect x="700.7" y="364.3" width="4.0" height="2.5" fill="#e4e5f0"/><rect x="687.9" y="373.9" width="1.0" height="1.0" fill="#15151c"/><rect x="694.8" y="363.5" width="1.0" height="2.0" fill="#15151c"/><rect x="701.1" y="361.0" width="3.0" height="1.0" fill="#30c030"/><rect x="702.7" y="357.4" width="1.0" height="2.0" fill="#9d9eae"/><rect x="693.1" y="368.3" width="1.0" height="3.0" fill="#e4e5f0"/><rect x="688.6" y="370.1" width="2.0" height="1.0" fill="#15151c"/><rect x="696.3" y="376.1" width="1.0" height="1.5" fill="#30c030"/><rect x="692.0" y="374.9" width="1.0" height="1.0" fill="#c3c4d6"/><rect x="695.9" y="346.3" width="2.5" height="3.0" fill="#15151c"/><rect x="693.3" y="346.8" width="1.5" height="3.0" fill="#9d9eae"/><rect x="705.2" y="347.9" width="1.0" height="2.0" fill="#d0d1e0"/><rect x="687.2" y="359.8" width="4.0" height="1.0" fill="#c3c4d6"/><rect x="700.1" y="358.3" width="1.5" height="3.0" fill="#15151c"/><rect x="695.8" y="357.0" width="4.0" height="1.0" fill="#15151c"/><rect x="687.0" y="373.4" width="2.5" height="1.0" fill="#b9bacb"/><rect x="691.8" y="357.4" width="2.0" height="1.0" fill="#15151c"/><rect x="689.1" y="376.2" width="4.0" height="2.5" fill="#15151c"/><rect x="687.2" y="364.4" width="2.5" height="1.5" fill="#e4e5f0"/><rect x="688.7" y="351.1" width="2.5" height="1.0" fill="#15151c"/><rect x="701.1" y="356.6" width="1.5" height="1.0" fill="#d0d1e0"/><rect x="698.4" y="362.7" width="1.5" height="2.5" fill="#15151c"/><rect x="690.6" y="373.1" width="1.5" height="3.0" fill="#15151c"/><rect x="691.5" y="367.7" width="1.5" height="3.0" fill="#9d9eae"/><rect x="709.3" y="372.2" width="1.5" height="3.0" fill="#15151c"/><rect x="688.1" y="347.6" width="1.0" height="2.0" fill="#e4e5f0"/><rect x="704.0" y="357.3" width="2.0" height="1.0" fill="#15151c"/><rect x="693.5" y="349.8" width="3.0" height="2.0" fill="#e4e5f0"/><rect x="698.3" y="366.2" width="1.5" height="1.0" fill="#15151c"/><rect x="693.2" y="375.2" width="3.0" height="1.0" fill="#15151c"/><rect x="688.5" y="358.0" width="4.0" height="1.0" fill="#d0d1e0"/><rect x="691.2" y="356.5" width="1.0" height="1.0" fill="#b9bacb"/><rect x="695.5" y="374.3" width="1.5" height="1.0" fill="#9d9eae"/><rect x="701.5" y="362.7" width="4.0" height="3.0" fill="#b9bacb"/><rect x="707.3" y="360.1" width="3.0" height="1.0" fill="#b9bacb"/><rect x="707.2" y="344.7" width="4.0" height="1.5" fill="#15151c"/><rect x="688.6" y="354.3" width="1.0" height="2.0" fill="#b9bacb"/><rect x="697.9" y="356.5" width="1.0" height="1.0" fill="#c3c4d6"/><rect x="701.8" y="369.4" width="4.0" height="3.0" fill="#9d9eae"/><rect x="702.8" y="374.6" width="2.0" height="1.0" fill="#15151c"/><rect x="700.7" y="364.6" width="1.0" height="2.0" fill="#15151c"/><rect x="687.3" y="346.3" width="2.5" height="2.5" fill="#e4e5f0"/><rect x="707.9" y="373.9" width="4.0" height="1.0" fill="#9d9eae"/><rect x="702.6" y="358.6" width="2.5" height="3.0" fill="#d0d1e0"/><rect x="698.4" y="361.5" width="3.0" height="1.0" fill="#e4e5f0"/><rect x="697.6" y="351.8" width="3.0" height="1.0" fill="#30c030"/><rect x="705.7" y="365.8" width="1.0" height="2.0" fill="#c3c4d6"/><rect x="695.5" y="348.9" width="2.0" height="1.0" fill="#15151c"/><rect x="691.0" y="373.4" width="1.5" height="2.5" fill="#30c030"/><rect x="707.1" y="354.8" width="2.5" height="2.0" fill="#30c030"/><rect x="701.6" y="371.3" width="2.0" height="1.0" fill="#15151c"/><rect x="692.2" y="374.4" width="1.5" height="2.0" fill="#15151c"/><rect x="698.7" y="372.5" width="1.5" height="1.0" fill="#c3c4d6"/><rect x="707.0" y="353.4" width="4.0" height="1.0" fill="#15151c"/><rect x="698.3" y="374.5" width="1.0" height="2.0" fill="#15151c"/><rect x="698.7" y="365.5" width="2.5" height="3.0" fill="#30c030"/><rect x="694.0" y="371.3" width="3.0" height="2.0" fill="#c3c4d6"/><rect x="701.9" y="353.6" width="3.0" height="1.0" fill="#b9bacb"/><rect x="705.2" y="344.6" width="2.0" height="3.0" fill="#b9bacb"/><rect x="691.3" y="369.4" width="2.5" height="2.0" fill="#c3c4d6"/><rect x="705.7" y="377.5" width="1.5" height="1.0" fill="#9d9eae"/><rect x="701.2" y="366.3" width="2.5" height="1.0" fill="#b9bacb"/><rect x="691.8" y="370.4" width="1.0" height="3.0" fill="#c3c4d6"/><rect x="687.3" y="359.1" width="1.5" height="3.0" fill="#30c030"/><rect x="692.4" y="370.5" width="1.0" height="1.0" fill="#9d9eae"/><rect x="697.5" y="376.4" width="4.0" height="2.5" fill="#15151c"/><rect x="707.4" y="346.8" width="2.5" height="3.0" fill="#15151c"/><rect x="697.7" y="364.6" width="1.5" height="2.0" fill="#d0d1e0"/><rect x="699.8" y="372.6" width="2.5" height="2.5" fill="#9d9eae"/><rect x="701.7" y="350.9" width="2.5" height="1.5" fill="#15151c"/><rect x="691.5" y="374.6" width="4.0" height="1.0" fill="#e4e5f0"/><rect x="709.5" y="374.3" width="2.0" height="2.5" fill="#c3c4d6"/><rect x="694.3" y="346.8" width="4.0" height="1.0" fill="#d0d1e0"/><rect x="696.7" y="352.9" width="2.0" height="2.5" fill="#d0d1e0"/><rect x="697.1" y="345.2" width="1.5" height="1.0" fill="#9d9eae"/><rect x="705.1" y="348.5" width="2.0" height="3.0" fill="#b9bacb"/><rect x="698.4" y="365.7" width="3.0" height="3.0" fill="#d0d1e0"/><rect x="708.4" y="346.8" width="2.5" height="2.5" fill="#d0d1e0"/><rect x="699.6" y="371.0" width="2.5" height="2.5" fill="#9d9eae"/><rect x="698.0" y="372.7" width="4.0" height="1.0" fill="#9d9eae"/><rect x="702.4" y="376.0" width="2.0" height="1.5" fill="#15151c"/><rect x="707.0" y="376.4" width="1.5" height="1.5" fill="#e4e5f0"/><rect x="698.4" y="357.4" width="2.0" height="2.5" fill="#9d9eae"/><rect x="700.3" y="344.9" width="3.0" height="1.0" fill="#c3c4d6"/><rect x="699.0" y="376.7" width="3.0" height="2.0" fill="#9d9eae"/><rect x="696.0" y="374.0" width="7.0" height="5.0" fill="#30c030" stroke="none" stroke-width="0"/><polygon points="669.0,357.5 698.0,356.0 698.0,363.0 669.0,364.5" fill="url(#mrod)" stroke="#15151c" stroke-width="0.9" stroke-linejoin="round" /><rect x="668.5" y="356.5" width="6.0" height="9.0" fill="#d8d9e6" stroke="#15151c" stroke-width="0.9"/><polygon points="652.0,384.0 712.0,377.0 712.0,383.0 675.0,391.0 652.0,388.0" fill="#3c3d46" stroke="#15151c" stroke-width="0.9" stroke-linejoin="round" /><polygon points="676.0,387.0 712.0,381.0 712.0,386.0 680.0,393.0" fill="#8d8e9d" stroke="#15151c" stroke-width="0.9" stroke-linejoin="round" /><rect x="690.0" y="390.0" width="20.0" height="43.0" fill="#5e5f6b" stroke="#15151c" stroke-width="0.9"/><rect x="690.5" y="390.0" width="3.0" height="43.0" fill="#c3c4d6" stroke="none" stroke-width="0"/><rect x="696.0" y="390.0" width="3.0" height="43.0" fill="#c3c4d6" stroke="none" stroke-width="0"/><rect x="702.0" y="390.0" width="3.0" height="43.0" fill="#c3c4d6" stroke="none" stroke-width="0"/><rect x="707.5" y="390.0" width="2.2" height="40.0" fill="#12909c" stroke="none" stroke-width="0"/><rect x="714.0" y="311.0" width="9.0" height="27.0" fill="#3c3d46" stroke="#15151c" stroke-width="0.9"/><rect x="715.0" y="311.5" width="7.0" height="4.0" fill="#b9bacb" stroke="none" stroke-width="0"/><rect x="714.3" y="318.0" width="8.4" height="2.5" fill="#8d8e9d" stroke="none" stroke-width="0"/><rect x="715.0" y="322.0" width="7.0" height="6.0" fill="#a9aabb" stroke="none" stroke-width="0"/><rect x="714.3" y="331.0" width="8.4" height="4.5" fill="#c3c4d6" stroke="none" stroke-width="0"/><rect x="712.0" y="338.0" width="17.0" height="6.0" fill="#686976" stroke="#15151c" stroke-width="0.9"/><polygon points="711.0,342.0 729.0,342.0 730.5,434.0 709.0,434.0" fill="#686976" stroke="#15151c" stroke-width="0.9" stroke-linejoin="round" /><polygon points="711.5,343.0 717.5,343.0 716.0,433.0 709.5,433.0" fill="#b9bacb" stroke="none" stroke-width="0" stroke-linejoin="round" /><polygon points="724.0,351.0 728.2,351.0 729.7,433.0 719.5,433.0" fill="#e488e8" stroke="none" stroke-width="0" stroke-linejoin="round" /><polygon points="726.5,351.0 728.5,351.0 730.0,433.0 727.5,433.0" fill="#8c4c9c" stroke="none" stroke-width="0" stroke-linejoin="round" /><polygon points="705.5,435.0 716.0,433.0 735.5,437.0 735.5,441.5 720.0,444.5 705.5,440.0" fill="#30c838" stroke="#0a500a" stroke-width="0.5" stroke-linejoin="round" /><rect x="730.0" y="396.5" width="32.0" height="35.5" fill="#62636f" stroke="#15151c" stroke-width="0.9"/><rect x="730.0" y="396.5" width="7.5" height="35.5" fill="#c0c1d2" stroke="#15151c" stroke-width="0.9"/><polygon points="754.0,356.0 778.0,358.0 782.0,441.0 750.0,441.0" fill="#5e5f6b" stroke="#15151c" stroke-width="0.9" stroke-linejoin="round" /><polygon points="755.0,357.0 760.0,357.0 757.0,440.0 751.0,440.0" fill="#c3c4d6" stroke="none" stroke-width="0" stroke-linejoin="round" /><polygon points="763.0,357.0 767.0,357.0 766.0,440.0 761.0,440.0" fill="#c3c4d6" stroke="none" stroke-width="0" stroke-linejoin="round" /><polygon points="770.5,357.0 775.0,357.0 775.5,440.0 770.0,440.0" fill="#c3c4d6" stroke="none" stroke-width="0" stroke-linejoin="round" /><polygon points="748.0,436.0 782.0,441.0 782.0,446.0 760.0,447.0 748.0,441.0" fill="#9d9eae" stroke="#15151c" stroke-width="0.9" stroke-linejoin="round" /><rect x="733.5" y="364.0" width="19.5" height="7.0" fill="#2cb82c" stroke="#0a400a" stroke-width="0.4"/><polygon points="731.5,371.0 752.0,370.0 762.0,375.0 762.0,382.5 731.5,383.0" fill="#d49c4c" stroke="#5a3c10" stroke-width="0.4" stroke-linejoin="round" /><rect x="732.5" y="384.0" width="29.5" height="9.0" fill="#2cc02c" stroke="#0a400a" stroke-width="0.4"/><rect x="736.0" y="385.0" width="9.0" height="5.0" fill="#9a9aa6" stroke="none" stroke-width="0"/><rect x="731.5" y="392.0" width="30.5" height="5.5" fill="#d49c4c" stroke="#5a3c10" stroke-width="0.4"/><polygon points="751.0,404.5 790.0,402.5 790.0,412.0 751.0,414.5" fill="url(#mrod)" stroke="#15151c" stroke-width="0.9" stroke-linejoin="round" /><ellipse cx="752.0" cy="409.5" rx="3.5" ry="5.5" fill="#b9bacb" stroke="#15151c" stroke-width="0.9" /><polygon points="782.0,348.0 814.0,346.0 814.0,432.0 782.0,436.0" fill="#4b4c57" stroke="#15151c" stroke-width="0.9" stroke-linejoin="round" /><rect x="803.0" y="385.4" width="3.0" height="1.5" fill="#30e030"/><rect x="783.8" y="370.3" width="4.0" height="2.5" fill="#d0d1e0"/><rect x="806.4" y="355.1" width="4.0" height="1.0" fill="#c3c4d6"/><rect x="798.5" y="375.3" width="1.5" height="2.0" fill="#d0d1e0"/><rect x="793.6" y="358.2" width="4.0" height="1.0" fill="#12909c"/><rect x="804.0" y="353.2" width="2.5" height="1.0" fill="#15151c"/><rect x="786.4" y="350.1" width="3.0" height="2.0" fill="#d0d1e0"/><rect x="810.4" y="357.5" width="1.5" height="1.0" fill="#15151c"/><rect x="809.9" y="374.0" width="2.0" height="1.5" fill="#30e030"/><rect x="787.7" y="393.6" width="4.0" height="1.0" fill="#15151c"/><rect x="783.6" y="368.5" width="2.5" height="1.5" fill="#b9bacb"/><rect x="792.3" y="386.8" width="2.0" height="1.0" fill="#b9bacb"/><rect x="802.7" y="364.7" width="1.0" height="2.5" fill="#e4e5f0"/><rect x="796.5" y="364.1" width="2.0" height="1.5" fill="#c3c4d6"/><rect x="787.8" y="361.0" width="2.5" height="3.0" fill="#d0d1e0"/><rect x="805.0" y="350.8" width="4.0" height="1.5" fill="#15151c"/><rect x="799.2" y="350.4" width="2.0" height="2.0" fill="#c3c4d6"/><rect x="799.2" y="392.9" width="4.0" height="1.0" fill="#9d9eae"/><rect x="792.8" y="365.6" width="1.5" height="2.0" fill="#e4e5f0"/><rect x="786.0" y="382.9" width="2.0" height="2.0" fill="#b9bacb"/><rect x="795.1" y="394.0" width="2.0" height="1.0" fill="#15151c"/><rect x="800.1" y="389.9" width="2.0" height="2.5" fill="#9d9eae"/><rect x="798.3" y="363.4" width="2.0" height="3.0" fill="#9d9eae"/><rect x="805.4" y="378.2" width="2.0" height="1.0" fill="#30e030"/><rect x="808.9" y="357.2" width="4.0" height="1.5" fill="#c3c4d6"/><rect x="798.5" y="367.7" width="1.0" height="2.5" fill="#d0d1e0"/><rect x="791.9" y="360.9" width="4.0" height="2.5" fill="#15151c"/><rect x="784.5" y="391.2" width="2.5" height="1.0" fill="#c3c4d6"/><rect x="806.1" y="355.8" width="2.5" height="1.5" fill="#30e030"/><rect x="800.0" y="385.5" width="3.0" height="1.0" fill="#9d9eae"/><rect x="793.6" y="352.6" width="1.5" height="2.0" fill="#15151c"/><rect x="795.7" y="395.0" width="2.0" height="1.0" fill="#15151c"/><rect x="808.9" y="380.3" width="3.0" height="2.0" fill="#9d9eae"/><rect x="791.0" y="368.0" width="2.5" height="1.5" fill="#b9bacb"/><rect x="806.8" y="373.4" width="1.0" height="2.0" fill="#15151c"/><rect x="805.6" y="357.9" width="4.0" height="2.0" fill="#c3c4d6"/><rect x="804.9" y="387.7" width="2.0" height="2.5" fill="#b9bacb"/><rect x="803.1" y="379.5" width="1.0" height="1.5" fill="#12909c"/><rect x="798.7" y="379.7" width="2.0" height="1.5" fill="#c3c4d6"/><rect x="803.0" y="391.1" width="2.0" height="3.0" fill="#9d9eae"/><rect x="798.1" y="350.5" width="4.0" height="1.0" fill="#9d9eae"/><rect x="801.8" y="370.6" width="2.0" height="1.5" fill="#e4e5f0"/><rect x="803.7" y="365.0" width="4.0" height="3.0" fill="#15151c"/><rect x="809.3" y="367.6" width="2.0" height="3.0" fill="#15151c"/><rect x="808.4" y="392.1" width="4.0" height="2.0" fill="#e4e5f0"/><rect x="810.9" y="358.6" width="1.5" height="2.5" fill="#b9bacb"/><rect x="802.0" y="382.0" width="2.5" height="1.5" fill="#30e030"/><rect x="800.0" y="392.1" width="2.5" height="1.0" fill="#e4e5f0"/><rect x="790.9" y="374.3" width="4.0" height="2.0" fill="#15151c"/><rect x="810.9" y="358.4" width="2.0" height="3.0" fill="#b9bacb"/><rect x="800.9" y="359.5" width="2.5" height="2.5" fill="#30e030"/><rect x="803.5" y="392.4" width="1.5" height="3.0" fill="#d0d1e0"/><rect x="808.4" y="355.0" width="1.5" height="1.0" fill="#15151c"/><rect x="798.1" y="368.7" width="2.5" height="1.0" fill="#b9bacb"/><rect x="799.8" y="375.4" width="2.5" height="3.0" fill="#d0d1e0"/><rect x="783.0" y="368.0" width="4.0" height="1.5" fill="#c3c4d6"/><rect x="801.9" y="374.6" width="2.5" height="1.0" fill="#c3c4d6"/><rect x="791.1" y="362.8" width="3.0" height="2.5" fill="#e4e5f0"/><rect x="791.2" y="365.3" width="2.0" height="2.5" fill="#b9bacb"/><rect x="805.4" y="378.3" width="2.5" height="2.0" fill="#b9bacb"/><rect x="787.3" y="367.2" width="2.5" height="1.0" fill="#c3c4d6"/><rect x="800.3" y="365.8" width="1.5" height="1.0" fill="#30e030"/><rect x="786.1" y="374.9" width="1.0" height="2.0" fill="#15151c"/><rect x="791.8" y="389.4" width="3.0" height="1.0" fill="#b9bacb"/><rect x="794.9" y="360.0" width="2.5" height="2.0" fill="#e4e5f0"/><rect x="793.4" y="391.3" width="2.5" height="3.0" fill="#15151c"/><rect x="790.0" y="392.7" width="3.0" height="2.5" fill="#c3c4d6"/><rect x="783.6" y="391.6" width="2.0" height="2.0" fill="#e4e5f0"/><rect x="786.9" y="351.1" width="2.5" height="1.5" fill="#30e030"/><rect x="789.6" y="351.8" width="3.0" height="2.0" fill="#b9bacb"/><rect x="796.2" y="375.2" width="2.5" height="1.0" fill="#d0d1e0"/><rect x="789.8" y="362.0" width="2.5" height="1.0" fill="#b9bacb"/><rect x="790.6" y="377.1" width="4.0" height="1.5" fill="#c3c4d6"/><rect x="806.3" y="387.9" width="3.0" height="3.0" fill="#9d9eae"/><rect x="791.7" y="374.0" width="1.0" height="1.0" fill="#9d9eae"/><rect x="802.7" y="351.2" width="3.0" height="1.5" fill="#b9bacb"/><rect x="803.9" y="375.4" width="2.0" height="3.0" fill="#c3c4d6"/><rect x="799.0" y="380.5" width="1.0" height="1.5" fill="#9d9eae"/><rect x="788.0" y="368.7" width="4.0" height="2.5" fill="#15151c"/><rect x="801.6" y="391.5" width="3.0" height="2.5" fill="#15151c"/><rect x="796.1" y="380.0" width="2.5" height="2.0" fill="#30e030"/><rect x="796.3" y="383.7" width="1.5" height="1.5" fill="#e4e5f0"/><rect x="805.6" y="375.0" width="1.0" height="3.0" fill="#15151c"/><rect x="786.9" y="371.3" width="2.5" height="1.5" fill="#9d9eae"/><rect x="797.8" y="368.9" width="2.5" height="1.5" fill="#9d9eae"/><rect x="804.2" y="362.0" width="1.0" height="1.0" fill="#e4e5f0"/><rect x="810.3" y="364.3" width="1.0" height="3.0" fill="#15151c"/><rect x="803.3" y="352.2" width="1.0" height="2.0" fill="#9d9eae"/><rect x="801.4" y="391.4" width="1.5" height="2.5" fill="#30e030"/><rect x="803.1" y="369.5" width="1.5" height="1.5" fill="#15151c"/><rect x="794.2" y="357.3" width="3.0" height="1.0" fill="#15151c"/><rect x="798.8" y="379.7" width="1.5" height="1.0" fill="#30e030"/><rect x="784.7" y="375.6" width="1.0" height="1.5" fill="#30e030"/><rect x="786.7" y="368.8" width="2.5" height="2.5" fill="#9d9eae"/><rect x="795.7" y="365.4" width="4.0" height="2.5" fill="#15151c"/><rect x="786.9" y="363.3" width="2.0" height="1.0" fill="#b9bacb"/><rect x="796.2" y="389.1" width="4.0" height="3.0" fill="#9d9eae"/><rect x="789.0" y="352.7" width="3.0" height="2.5" fill="#d0d1e0"/><rect x="797.5" y="356.0" width="2.0" height="1.5" fill="#d0d1e0"/><rect x="803.6" y="357.9" width="2.0" height="2.0" fill="#30e030"/><rect x="792.9" y="374.6" width="1.0" height="3.0" fill="#c3c4d6"/><rect x="797.7" y="370.4" width="1.0" height="1.0" fill="#15151c"/><rect x="809.5" y="354.7" width="2.5" height="2.0" fill="#e4e5f0"/><rect x="804.0" y="352.3" width="1.0" height="2.5" fill="#b9bacb"/><rect x="804.8" y="382.2" width="2.5" height="3.0" fill="#e4e5f0"/><rect x="804.3" y="356.1" width="4.0" height="2.0" fill="#15151c"/><rect x="806.0" y="362.9" width="2.5" height="1.5" fill="#15151c"/><rect x="803.7" y="366.8" width="4.0" height="1.5" fill="#30e030"/><rect x="791.3" y="377.1" width="2.0" height="3.0" fill="#b9bacb"/><rect x="799.0" y="375.8" width="3.0" height="1.0" fill="#30e030"/><rect x="801.0" y="350.0" width="6.0" height="8.5" fill="#12909c" stroke="none" stroke-width="0"/><rect x="804.0" y="363.5" width="9.0" height="8.5" fill="#28d028" stroke="none" stroke-width="0"/><polygon points="801.0,376.0 810.0,378.0 809.5,383.0 800.5,381.0" fill="#e4e5f0" stroke="#15151c" stroke-width="0.4" stroke-linejoin="round" /><rect x="796.6" y="398.0" width="19.0" height="17.0" fill="#5e5f6b" stroke="#15151c" stroke-width="0.7"/><rect x="784.7" y="397.1" width="2.0" height="1.0" fill="#9d9eae"/><rect x="788.5" y="416.5" width="1.0" height="1.5" fill="#15151c"/><rect x="785.8" y="397.6" width="1.0" height="1.0" fill="#e4e5f0"/><rect x="778.9" y="408.4" width="3.0" height="2.0" fill="#d0d1e0"/><rect x="786.7" y="397.3" width="4.0" height="3.0" fill="#b9bacb"/><rect x="794.1" y="397.1" width="2.5" height="1.0" fill="#b9bacb"/><rect x="780.5" y="398.6" width="2.0" height="2.0" fill="#e4e5f0"/><rect x="780.9" y="408.2" width="3.0" height="3.0" fill="#15151c"/><rect x="779.7" y="412.0" width="1.5" height="1.5" fill="#b9bacb"/><rect x="781.7" y="410.6" width="1.0" height="2.5" fill="#15151c"/><rect x="788.0" y="406.0" width="2.0" height="2.0" fill="#e4e5f0"/><rect x="790.2" y="401.6" width="1.5" height="1.0" fill="#b9bacb"/><rect x="786.4" y="403.4" width="2.0" height="2.5" fill="#d0d1e0"/><rect x="794.7" y="398.5" width="2.0" height="2.5" fill="#15151c"/><rect x="780.7" y="407.0" width="1.5" height="1.5" fill="#c3c4d6"/><rect x="789.5" y="409.2" width="4.0" height="1.0" fill="#9d9eae"/><rect x="784.0" y="406.4" width="2.0" height="3.0" fill="#d0d1e0"/><rect x="795.0" y="406.9" width="1.0" height="1.0" fill="#e4e5f0"/><rect x="790.6" y="409.6" width="1.0" height="3.0" fill="#d0d1e0"/><rect x="784.6" y="410.0" width="2.0" height="3.0" fill="#d0d1e0"/><rect x="780.8" y="398.6" width="2.5" height="1.5" fill="#c3c4d6"/><rect x="780.3" y="401.6" width="1.5" height="1.5" fill="#15151c"/><rect x="780.7" y="405.2" width="2.5" height="1.0" fill="#c3c4d6"/><rect x="793.1" y="402.1" width="1.5" height="2.0" fill="#15151c"/><rect x="793.0" y="416.1" width="2.0" height="3.0" fill="#b9bacb"/><rect x="780.7" y="411.1" width="1.0" height="1.0" fill="#d0d1e0"/><rect x="781.0" y="402.1" width="2.5" height="2.5" fill="#b9bacb"/><rect x="784.1" y="408.2" width="2.5" height="2.5" fill="#b9bacb"/><rect x="792.3" y="410.1" width="4.0" height="2.5" fill="#c3c4d6"/><rect x="791.2" y="404.2" width="2.5" height="3.0" fill="#15151c"/><rect x="779.4" y="427.0" width="16.4" height="14.0" fill="#62636f" stroke="#15151c" stroke-width="0.6"/><rect x="811.0" y="417.6" width="1.5" height="1.5" fill="#c3c4d6"/><rect x="800.7" y="429.0" width="1.0" height="1.0" fill="#15151c"/><rect x="797.4" y="421.4" width="2.5" height="3.0" fill="#15151c"/><rect x="799.6" y="425.6" width="2.5" height="2.5" fill="#e4e5f0"/><rect x="807.2" y="425.1" width="2.5" height="1.0" fill="#e4e5f0"/><rect x="809.2" y="420.5" width="2.5" height="2.0" fill="#9d9eae"/><rect x="798.2" y="426.2" width="4.0" height="1.5" fill="#15151c"/><rect x="798.4" y="416.7" width="3.0" height="2.0" fill="#d0d1e0"/><rect x="803.0" y="424.4" width="4.0" height="1.0" fill="#15151c"/><rect x="804.9" y="423.0" width="3.0" height="1.0" fill="#c3c4d6"/><rect x="799.6" y="426.4" width="2.5" height="3.0" fill="#b9bacb"/><rect x="804.9" y="420.9" width="2.5" height="3.0" fill="#9d9eae"/><rect x="798.9" y="425.2" width="2.0" height="2.0" fill="#9d9eae"/><rect x="801.1" y="419.9" width="3.0" height="3.0" fill="#15151c"/><rect x="805.4" y="419.6" width="2.5" height="2.5" fill="#b9bacb"/><rect x="803.6" y="416.9" width="3.0" height="1.5" fill="#e4e5f0"/><rect x="799.6" y="418.8" width="4.0" height="2.5" fill="#d0d1e0"/><rect x="800.1" y="416.4" width="2.0" height="1.5" fill="#c3c4d6"/><rect x="790.0" y="332.0" width="6.0" height="20.0" fill="#b9bacb" stroke="#15151c" stroke-width="0.9"/><rect x="776.0" y="402.0" width="14.0" height="10.0" fill="#9d9eae" stroke="#15151c" stroke-width="0.9"/><polygon points="834.0,392.0 872.0,396.0 872.0,420.0 834.0,420.0" fill="#50515c" stroke="#15151c" stroke-width="0.9" stroke-linejoin="round" /><rect x="862.9" y="410.9" width="1.5" height="2.0" fill="#c3c4d6"/><rect x="865.8" y="409.2" width="1.5" height="2.0" fill="#e4e5f0"/><rect x="864.1" y="402.2" width="3.0" height="1.0" fill="#b9bacb"/><rect x="849.4" y="413.3" width="2.5" height="1.0" fill="#d0d1e0"/><rect x="855.6" y="416.9" width="4.0" height="1.0" fill="#15151c"/><rect x="846.8" y="406.6" width="3.0" height="2.0" fill="#c3c4d6"/><rect x="860.3" y="416.1" width="4.0" height="1.0" fill="#d0d1e0"/><rect x="866.0" y="403.6" width="1.5" height="3.0" fill="#d0d1e0"/><rect x="859.0" y="407.1" width="2.5" height="1.0" fill="#c3c4d6"/><rect x="862.3" y="409.0" width="1.5" height="1.0" fill="#d0d1e0"/><rect x="851.2" y="416.5" width="1.0" height="1.0" fill="#b9bacb"/><rect x="848.7" y="409.1" width="4.0" height="1.0" fill="#15151c"/><rect x="868.6" y="414.9" width="1.5" height="1.5" fill="#15151c"/><rect x="868.9" y="409.3" width="2.0" height="1.5" fill="#9d9eae"/><rect x="852.2" y="413.7" width="2.5" height="2.0" fill="#15151c"/><rect x="867.8" y="408.4" width="4.0" height="3.0" fill="#c3c4d6"/><rect x="861.0" y="409.0" width="1.0" height="2.5" fill="#b9bacb"/><rect x="858.8" y="411.0" width="3.0" height="1.5" fill="#15151c"/><rect x="859.8" y="414.5" width="4.0" height="1.0" fill="#9d9eae"/><rect x="868.3" y="405.3" width="2.0" height="2.5" fill="#15151c"/><rect x="865.4" y="407.6" width="1.0" height="1.0" fill="#c3c4d6"/><rect x="865.8" y="414.9" width="4.0" height="2.5" fill="#15151c"/><rect x="860.5" y="413.5" width="1.5" height="3.0" fill="#c3c4d6"/><rect x="861.3" y="415.1" width="3.0" height="2.0" fill="#d0d1e0"/><rect x="847.7" y="412.9" width="1.5" height="2.5" fill="#c3c4d6"/><rect x="847.3" y="405.7" width="1.0" height="1.5" fill="#e4e5f0"/><rect x="852.2" y="407.5" width="1.0" height="2.0" fill="#9d9eae"/><rect x="867.6" y="413.2" width="4.0" height="1.0" fill="#c3c4d6"/><rect x="849.5" y="411.4" width="1.0" height="1.5" fill="#c3c4d6"/><rect x="868.5" y="407.5" width="1.0" height="1.0" fill="#b9bacb"/><rect x="864.5" y="408.5" width="2.0" height="2.5" fill="#c3c4d6"/><rect x="858.8" y="406.1" width="2.0" height="1.0" fill="#d0d1e0"/><rect x="849.0" y="411.3" width="2.5" height="3.0" fill="#c3c4d6"/><rect x="860.8" y="414.3" width="3.0" height="1.5" fill="#b9bacb"/><polygon points="834.0,398.0 846.0,398.0 846.0,418.0 834.0,418.0" fill="#c6c7d9" stroke="#15151c" stroke-width="0.9" stroke-linejoin="round" /><rect x="849.0" y="430.0" width="15.0" height="29.0" fill="#3c3d46" stroke="none" stroke-width="0"/><rect x="856.5" y="452.2" width="3.0" height="1.0" fill="#c3c4d6"/><rect x="859.6" y="443.8" width="2.5" height="3.0" fill="#e4e5f0"/><rect x="860.8" y="453.6" width="1.5" height="3.0" fill="#9d9eae"/><rect x="854.3" y="437.9" width="4.0" height="2.5" fill="#15151c"/><rect x="854.9" y="444.2" width="1.0" height="1.5" fill="#c3c4d6"/><rect x="858.1" y="447.6" width="4.0" height="2.5" fill="#c3c4d6"/><rect x="858.7" y="437.0" width="2.0" height="2.5" fill="#c3c4d6"/><rect x="861.4" y="456.3" width="2.0" height="1.5" fill="#e4e5f0"/><rect x="850.7" y="439.2" width="4.0" height="1.5" fill="#d0d1e0"/><rect x="853.0" y="440.0" width="3.0" height="1.5" fill="#e4e5f0"/><rect x="853.8" y="448.2" width="3.0" height="2.0" fill="#c3c4d6"/><rect x="858.5" y="444.4" width="2.0" height="3.0" fill="#9d9eae"/><rect x="850.7" y="452.0" width="1.0" height="1.0" fill="#d0d1e0"/><rect x="853.1" y="436.1" width="1.0" height="2.0" fill="#15151c"/><rect x="853.4" y="445.3" width="4.0" height="3.0" fill="#b9bacb"/><rect x="854.5" y="452.1" width="3.0" height="2.5" fill="#c3c4d6"/><rect x="855.8" y="440.9" width="1.0" height="1.0" fill="#b9bacb"/><rect x="860.8" y="431.4" width="1.0" height="3.0" fill="#9d9eae"/><rect x="856.7" y="452.8" width="4.0" height="2.0" fill="#15151c"/><rect x="856.5" y="431.8" width="2.5" height="3.0" fill="#e4e5f0"/><rect x="852.6" y="437.7" width="3.0" height="3.0" fill="#e4e5f0"/><rect x="854.9" y="446.9" width="2.5" height="1.5" fill="#c3c4d6"/><rect x="858.2" y="439.3" width="2.5" height="1.0" fill="#9d9eae"/><rect x="861.5" y="454.8" width="1.5" height="1.0" fill="#9d9eae"/><rect x="859.5" y="435.4" width="3.0" height="1.5" fill="#b9bacb"/><rect x="860.2" y="439.4" width="2.5" height="2.0" fill="#15151c"/><rect x="857.4" y="431.9" width="2.0" height="2.5" fill="#15151c"/><rect x="851.8" y="433.4" width="4.0" height="1.0" fill="#c3c4d6"/><rect x="855.8" y="436.2" width="3.0" height="1.0" fill="#15151c"/><rect x="850.4" y="453.7" width="1.5" height="2.5" fill="#d0d1e0"/><rect x="860.5" y="448.0" width="3.0" height="2.0" fill="#d0d1e0"/><rect x="849.8" y="433.2" width="1.5" height="2.0" fill="#b9bacb"/><rect x="858.5" y="446.3" width="2.5" height="1.0" fill="#15151c"/><rect x="856.9" y="439.7" width="3.0" height="1.0" fill="#e4e5f0"/><rect x="858.2" y="455.2" width="4.0" height="2.0" fill="#d0d1e0"/><rect x="860.7" y="446.5" width="1.0" height="2.0" fill="#9d9eae"/><rect x="857.4" y="433.5" width="3.0" height="1.0" fill="#15151c"/><rect x="852.6" y="452.7" width="2.5" height="2.0" fill="#e4e5f0"/><rect x="852.7" y="435.5" width="1.5" height="1.0" fill="#e4e5f0"/><rect x="859.5" y="445.2" width="1.5" height="1.0" fill="#d0d1e0"/><rect x="858.4" y="431.2" width="2.0" height="3.0" fill="#d0d1e0"/><rect x="853.9" y="440.4" width="1.0" height="1.0" fill="#c3c4d6"/><rect x="857.2" y="451.8" width="1.5" height="1.5" fill="#c3c4d6"/><rect x="853.9" y="437.9" width="2.5" height="2.5" fill="#c3c4d6"/><rect x="853.1" y="441.2" width="1.5" height="1.0" fill="#d0d1e0"/><rect x="850.9" y="456.2" width="2.0" height="1.0" fill="#15151c"/><rect x="852.3" y="440.7" width="2.5" height="1.5" fill="#d0d1e0"/><rect x="854.7" y="451.5" width="4.0" height="1.0" fill="#15151c"/><rect x="835.0" y="419.5" width="5.6" height="41.0" fill="url(#mpole)" stroke="#15151c" stroke-width="0.9"/><rect x="864.5" y="416.0" width="6.0" height="40.5" fill="url(#mpole)" stroke="#15151c" stroke-width="0.9"/><polygon points="871.0,417.0 892.0,423.0 892.0,429.0 871.0,422.0" fill="#e8e8ea" stroke="none" stroke-width="0" stroke-linejoin="round" /><polygon points="818.0,351.0 829.2,343.5 825.0,466.0 813.0,468.0" fill="#bfc0d1" stroke="#15151c" stroke-width="0.7" stroke-linejoin="round" /><polygon points="829.2,343.5 834.4,343.5 829.5,464.0 825.0,466.0" fill="#62636f" stroke="#15151c" stroke-width="0.6" stroke-linejoin="round" /><polygon points="805.2,467.0 814.0,464.5 833.5,467.5 833.5,472.5 815.0,474.5 805.2,471.5" fill="#a9aabb" stroke="#15151c" stroke-width="0.7" stroke-linejoin="round" /><polygon points="805.2,467.0 812.0,466.0 812.0,473.0 805.2,471.5" fill="#dcdde8" stroke="#15151c" stroke-width="0.5" stroke-linejoin="round" /><ellipse cx="820.5" cy="390.0" rx="1.2" ry="2.2" fill="#33343c" stroke="none" stroke-width="0" /><ellipse cx="820.5" cy="400.0" rx="1.2" ry="2.2" fill="#33343c" stroke="none" stroke-width="0" /><rect x="800.0" y="440.0" width="12.0" height="29.0" fill="#686976" stroke="#15151c" stroke-width="0.7"/><rect x="803.5" y="431.0" width="4.5" height="18.0" fill="#c3c4d6" stroke="#15151c" stroke-width="0.5"/><ellipse cx="820.5" cy="345.5" rx="3.0" ry="4.2" fill="#c9cadc" stroke="#15151c" stroke-width="0.7" /><rect x="822.5" y="339.0" width="6.0" height="9.0" fill="#1e1f27" stroke="none" stroke-width="0"/><rect x="824.0" y="341.0" width="3.0" height="3.0" fill="#c9cadc" stroke="none" stroke-width="0"/><polygon points="598.0,541.0 616.0,538.0 614.0,611.0 599.0,611.0" fill="#6f707e" stroke="#15151c" stroke-width="0.5" stroke-linejoin="round" /><polygon points="598.0,541.0 604.0,540.0 603.0,611.0 599.0,611.0" fill="#c6c7d9" stroke="none" stroke-width="0" stroke-linejoin="round" /><polygon points="519.0,611.0 574.0,606.0 574.0,612.0 528.0,618.0" fill="#a9aabb" stroke="#15151c" stroke-width="0.4" stroke-linejoin="round" /><polygon points="600.0,606.0 672.0,627.0 666.0,632.0 600.0,612.0" fill="#c6c7d9" stroke="#15151c" stroke-width="0.4" stroke-linejoin="round" /><rect x="505.5" y="634.0" width="6.0" height="9.0" fill="#08080a" stroke="none" stroke-width="0"/><ellipse cx="508.5" cy="644.0" rx="12.0" ry="3.4" fill="#d6d7e2" stroke="#15151c" stroke-width="0.5" /><rect x="578.5" y="657.5" width="6.0" height="9.0" fill="#08080a" stroke="none" stroke-width="0"/><ellipse cx="581.5" cy="667.5" rx="12.0" ry="3.4" fill="#d6d7e2" stroke="#15151c" stroke-width="0.5" /><rect x="671.0" y="647.0" width="6.0" height="9.0" fill="#08080a" stroke="none" stroke-width="0"/><ellipse cx="674.0" cy="657.0" rx="12.0" ry="3.4" fill="#d6d7e2" stroke="#15151c" stroke-width="0.5" /><rect x="602.0" y="619.5" width="6.0" height="9.0" fill="#08080a" stroke="none" stroke-width="0"/><ellipse cx="605.0" cy="629.5" rx="12.0" ry="3.4" fill="#d6d7e2" stroke="#15151c" stroke-width="0.5" /><polygon points="506.0,503.0 524.0,509.0 519.0,612.0 498.5,626.0" fill="#c6c7d9" stroke="#15151c" stroke-width="0.5" stroke-linejoin="round" /><polygon points="514.0,520.0 524.0,524.0 519.5,611.0 509.0,618.0" fill="#7c7d8a" stroke="#15151c" stroke-width="0.4" stroke-linejoin="round" /><polygon points="579.0,536.0 589.0,530.0 582.0,645.0 574.0,640.0" fill="#c6c7d9" stroke="#15151c" stroke-width="0.5" stroke-linejoin="round" /><polygon points="589.0,530.0 600.0,534.0 593.0,645.0 582.0,645.0" fill="#6f707e" stroke="#15151c" stroke-width="0.5" stroke-linejoin="round" /><polygon points="498.5,616.0 582.0,640.0 582.0,656.5 498.5,627.0" fill="#c3c4d6" stroke="#15151c" stroke-width="0.5" stroke-linejoin="round" /><polygon points="507.0,617.0 519.0,611.5 574.0,628.0 574.0,638.0" fill="#8d8e9d" stroke="#15151c" stroke-width="0.4" stroke-linejoin="round" /><polygon points="671.0,533.0 692.5,517.0 685.0,645.0 666.5,630.0" fill="#7c7d8a" stroke="#15151c" stroke-width="0.5" stroke-linejoin="round" /><polygon points="671.0,535.0 679.0,533.0 674.5,634.0 666.5,630.0" fill="#c6c7d9" stroke="#15151c" stroke-width="0.4" stroke-linejoin="round" /><polygon points="582.0,643.0 685.0,631.0 685.0,645.0 582.0,656.5" fill="#6f707e" stroke="#15151c" stroke-width="0.5" stroke-linejoin="round" /><polygon points="593.0,636.0 666.0,628.5 676.0,632.0 593.0,642.0" fill="#a9aabb" stroke="#15151c" stroke-width="0.4" stroke-linejoin="round" /><polygon points="506.0,500.0 589.0,528.0 589.0,542.0 506.0,513.0" fill="#c6c7d9" stroke="#15151c" stroke-width="0.5" stroke-linejoin="round" /><polygon points="589.0,528.0 692.5,514.0 692.5,528.0 589.0,542.0" fill="#77788a" stroke="#15151c" stroke-width="0.5" stroke-linejoin="round" /><polygon points="506.0,498.0 610.0,488.0 692.5,512.5 589.0,527.0" fill="#b5b6c7" stroke="#15151c" stroke-width="0.5" stroke-linejoin="round" /><polygon points="506.0,498.0 589.0,527.0 589.0,530.0 506.0,501.0" fill="#d6d7e6" stroke="#15151c" stroke-width="0.3" stroke-linejoin="round" /><polygon points="589.0,527.0 692.5,512.5 692.5,515.5 589.0,530.0" fill="#8d8e9d" stroke="#15151c" stroke-width="0.3" stroke-linejoin="round" /><path d="M550 440V506A50.600 13 0 0 0 651.200 506V440z" fill="url(#mh)" stroke="#15151c" stroke-width=".5"/><path d="M532 395V437A73 17 0 0 0 678 437V395z" fill="url(#mh)" stroke="#15151c" stroke-width=".5"/><ellipse cx="605.0" cy="395.0" rx="73.0" ry="17.0" fill="#c2c3d5" stroke="#15151c" stroke-width="0.5" /><ellipse cx="605.0" cy="394.0" rx="44.0" ry="10.5" fill="url(#mhole)" stroke="#15151c" stroke-width="0.5" /><path d="M561.500 396A44 10.500 0 0 0 648.500 396A44 8 0 0 1 561.500 396z" fill="#cbccde" stroke="none"/><ellipse cx="808.5" cy="600.0" rx="6.2" ry="9.2" fill="#55565f" stroke="#15151c" stroke-width="1.1" /><ellipse cx="810.5" cy="601.0" rx="2.6" ry="3.8" fill="#3c3d46" stroke="#15151c" stroke-width="0.9" /><path d="M780.0 604.0v-7.500h24.500v7.500A12.250 5 0 0 1 780.0 604.0z" fill="url(#mh)" stroke="#15151c" stroke-width="1"/><ellipse cx="792.2" cy="596.5" rx="12.2" ry="3.6" fill="#111116" stroke="#15151c" stroke-width="0.6" /><ellipse cx="791.0" cy="597.5" rx="8.0" ry="2.0" fill="#c9cadc" stroke="#15151c" stroke-width="0.5" /><rect x="784.0" y="584.5" width="17.0" height="9.5" fill="url(#mh)" stroke="#15151c" stroke-width="0.9"/><path d="M785.5 590.5h13" stroke="#15151c" stroke-width="2"/><polygon points="776.0,579.5 793.0,577.0 813.0,581.0 812.5,583.5 796.0,586.0 777.0,581.8" fill="#0c0c10" stroke="#15151c" stroke-width="0.8" stroke-linejoin="round" /><polygon points="779.0,579.6 793.0,577.6 809.0,581.0 795.5,583.6" fill="#b1b2c3" stroke="none" stroke-width="0" stroke-linejoin="round" /><ellipse cx="767.8" cy="675.6" rx="6.2" ry="9.2" fill="#55565f" stroke="#15151c" stroke-width="1.1" /><ellipse cx="769.8" cy="676.6" rx="2.6" ry="3.8" fill="#3c3d46" stroke="#15151c" stroke-width="0.9" /><path d="M739.3 679.6v-7.500h24.500v7.500A12.250 5 0 0 1 739.3 679.6z" fill="url(#mh)" stroke="#15151c" stroke-width="1"/><ellipse cx="751.5" cy="672.1" rx="12.2" ry="3.6" fill="#111116" stroke="#15151c" stroke-width="0.6" /><ellipse cx="750.3" cy="673.1" rx="8.0" ry="2.0" fill="#c9cadc" stroke="#15151c" stroke-width="0.5" /><rect x="743.3" y="660.1" width="17.0" height="9.5" fill="url(#mh)" stroke="#15151c" stroke-width="0.9"/><path d="M744.8 666.1h13" stroke="#15151c" stroke-width="2"/><polygon points="735.3,655.1 752.3,652.6 772.3,656.6 771.8,659.1 755.3,661.6 736.3,657.4" fill="#0c0c10" stroke="#15151c" stroke-width="0.8" stroke-linejoin="round" /><polygon points="738.3,655.2 752.3,653.2 768.3,656.6 754.8,659.2" fill="#b1b2c3" stroke="none" stroke-width="0" stroke-linejoin="round" /><ellipse cx="962.5" cy="652.7" rx="6.2" ry="9.2" fill="#55565f" stroke="#15151c" stroke-width="1.1" /><ellipse cx="964.5" cy="653.7" rx="2.6" ry="3.8" fill="#3c3d46" stroke="#15151c" stroke-width="0.9" /><path d="M934.0 656.7v-7.500h24.500v7.500A12.250 5 0 0 1 934.0 656.7z" fill="url(#mh)" stroke="#15151c" stroke-width="1"/><ellipse cx="946.2" cy="649.2" rx="12.2" ry="3.6" fill="#111116" stroke="#15151c" stroke-width="0.6" /><ellipse cx="945.0" cy="650.2" rx="8.0" ry="2.0" fill="#c9cadc" stroke="#15151c" stroke-width="0.5" /><rect x="938.0" y="637.2" width="17.0" height="9.5" fill="url(#mh)" stroke="#15151c" stroke-width="0.9"/><path d="M939.5 643.2h13" stroke="#15151c" stroke-width="2"/><polygon points="930.0,632.2 947.0,629.7 967.0,633.7 966.5,636.2 950.0,638.7 931.0,634.5" fill="#0c0c10" stroke="#15151c" stroke-width="0.8" stroke-linejoin="round" /><polygon points="933.0,632.3 947.0,630.3 963.0,633.7 949.5,636.3" fill="#b1b2c3" stroke="none" stroke-width="0" stroke-linejoin="round" /><polygon points="891.0,518.0 893.6,520.0 893.6,537.0 891.0,535.0" fill="url(#mlogo)" stroke="none" stroke-width="0" stroke-linejoin="round" /><polygon points="894.5,513.0 897.1,515.0 897.1,537.0 894.5,535.0" fill="url(#mlogo)" stroke="none" stroke-width="0" stroke-linejoin="round" /><polygon points="898.5,508.5 901.1,510.5 901.1,537.0 898.5,535.0" fill="url(#mlogo)" stroke="none" stroke-width="0" stroke-linejoin="round" /><polygon points="936.6,518.0 934.0,520.0 934.0,537.0 936.6,535.0" fill="url(#mlogo)" stroke="none" stroke-width="0" stroke-linejoin="round" /><polygon points="933.1,513.0 930.5,515.0 930.5,537.0 933.1,535.0" fill="url(#mlogo)" stroke="none" stroke-width="0" stroke-linejoin="round" /><polygon points="929.1,508.5 926.5,510.5 926.5,537.0 929.1,535.0" fill="url(#mlogo)" stroke="none" stroke-width="0" stroke-linejoin="round" /><polygon points="891.0,535.0 912.0,537.5 936.6,535.0 936.6,540.0 891.0,540.0" fill="url(#mlogo)" stroke="none" stroke-width="0" stroke-linejoin="round" /><path d="M915 510.500c-9 1.500-12.500 9-9.500 16.500 1-7 4-9.500 8-9.500v18c9-1.500 12-8 9-15.500-1 6-3.500 8.500-7 9z" fill="url(#mlogo)"/><text x="946.500" y="529" font-size="17.500" font-weight="500" fill="url(#mlogo)" font-family="Liberation Sans,Noto Sans CJK SC,sans-serif" textLength="82.500" lengthAdjust="spacingAndGlyphs">智造资料网</text><text x="947" y="538.300" font-size="4.600" font-weight="bold" fill="#ee8a1c" font-family="Liberation Sans,sans-serif" textLength="82" lengthAdjust="spacingAndGlyphs">INTELLIGENT MANUFACTURING DATA</text><polygon points="100.5,921.0 106.0,917.5 122.0,917.0 137.5,922.0 136.0,946.0 100.0,944.0" fill="#8a93b4" stroke="#cfd0d8" stroke-width="0.6" stroke-linejoin="round" fill-opacity=".45"/><polygon points="104.0,945.5 118.0,941.5 136.0,947.0 120.0,949.5" fill="#c8b820" stroke="#f0e800" stroke-width="0.6" stroke-linejoin="round" fill-opacity=".55"/><line x1="120.0" y1="939.0" x2="123.5" y2="876.0" stroke="#10dce8" stroke-width="2.2"/><polygon points="123.8,868.0 119.5,879.0 127.5,879.0" fill="#10e8f0" stroke="none" stroke-width="0" stroke-linejoin="round" /><line x1="119.0" y1="941.0" x2="99.0" y2="944.5" stroke="#c81010" stroke-width="2.2"/><polygon points="92.0,945.0 101.0,940.5 101.0,949.0" fill="#e01010" stroke="none" stroke-width="0" stroke-linejoin="round" /><line x1="121.0" y1="942.0" x2="146.0" y2="949.5" stroke="#10e020" stroke-width="2.2"/><polygon points="151.5,951.5 143.5,945.5 142.5,953.0" fill="#10e020" stroke="none" stroke-width="0" stroke-linejoin="round" /><ellipse cx="119.8" cy="940.5" rx="3.2" ry="2.4" fill="#8a8a8a" stroke="none" stroke-width="0" /><text x="118.500" y="866" font-size="12" fill="#d8d8dc" font-family="Liberation Sans,sans-serif">Z</text><text x="82" y="950.500" font-size="12" fill="#d8d8dc" font-family="Liberation Sans,sans-serif">X</text><text x="150.500" y="958.500" font-size="12" fill="#d8d8dc" font-family="Liberation Sans,sans-serif">Y</text></svg>
<svg class="ico" style="left:0px;top:0px" width="320" height="180" viewBox="0 0 320 180"><defs><linearGradient id="gb" x1="0" x2="1"><stop offset="0" stop-color="#8fb4ee"/><stop offset=".35" stop-color="#5e86d2"/><stop offset="1" stop-color="#2c4a8e"/></linearGradient><linearGradient id="gl" x1="0" x2="1"><stop offset="0" stop-color="#eaf0fb"/><stop offset="1" stop-color="#b4c6e6"/></linearGradient><linearGradient id="gdoc" x1="0" y1="0" x2="1" y2="1"><stop offset="0" stop-color="#ffffff"/><stop offset="1" stop-color="#a9c4f2"/></linearGradient><linearGradient id="gfold" x1="0" y1="0" x2="0" y2="1"><stop offset="0" stop-color="#fbe39a"/><stop offset="1" stop-color="#e9b94b"/></linearGradient><linearGradient id="ggrey" x1="0" y1="0" x2="0" y2="1"><stop offset="0" stop-color="#c9c9c9"/><stop offset="1" stop-color="#7d7d7d"/></linearGradient><linearGradient id="ggem" x1="0" y1="0" x2="1" y2="1"><stop offset="0" stop-color="#6c9cf0"/><stop offset="1" stop-color="#1c3c94"/></linearGradient><radialGradient id="gsmile" cx=".4" cy=".35" r=".7"><stop offset="0" stop-color="#fff6a0"/><stop offset="1" stop-color="#f0b020"/></radialGradient><radialGradient id="gball" cx=".35" cy=".3" r=".8"><stop offset="0" stop-color="#ffffff"/><stop offset="1" stop-color="#555"/></radialGradient><linearGradient id="ggreen" x1="0" y1="0" x2="1" y2="1"><stop offset="0" stop-color="#8ee060"/><stop offset="1" stop-color="#23a023"/></linearGradient></defs><rect x="4" y="4" width="24" height="24" fill="#8a8b9d"/><rect x="32" y="4" width="24" height="24" fill="#8a8b9d"/><rect x="60" y="4" width="24" height="24" fill="#8a8b9d"/><rect x="88" y="4" width="24" height="24" fill="#8a8b9d"/><rect x="116" y="4" width="24" height="24" fill="#8a8b9d"/><rect x="144" y="4" width="24" height="24" fill="#8a8b9d"/><rect x="172" y="4" width="24" height="24" fill="#8a8b9d"/><rect x="200" y="4" width="24" height="24" fill="#8a8b9d"/><rect x="228" y="4" width="24" height="24" fill="#8a8b9d"/><rect x="256" y="4" width="24" height="24" fill="#8a8b9d"/><rect x="284" y="4" width="24" height="24" fill="#8a8b9d"/><rect x="4" y="32" width="24" height="24" fill="#8a8b9d"/><rect x="4" y="60" width="24" height="24" fill="#8a8b9d"/><rect x="4.500" y="88.5" width="23" height="23" fill="#9c9684" stroke="#e8c45c" stroke-width="1.200"/><rect x="4" y="116" width="24" height="24" fill="#8a8b9d"/><rect x="4" y="144" width="24" height="24" fill="#8a8b9d"/><rect x="7.500" y="8" width="17" height="3.600" rx=".8" fill="#4a5f8c"/><rect x="7.500" y="14.200" width="17" height="3.600" rx=".8" fill="#4a5f8c"/><rect x="7.500" y="20.400" width="17" height="3.600" rx=".8" fill="#4a5f8c"/><rect x="38.500" y="12" width="11" height="9.500" fill="url(#gl)" stroke="#9a9aa8" stroke-width=".6"/><g transform="translate(37.00 10.50)" ><rect x="-2.2" y="-2.2" width="4.400" height="4.400" fill="#2fb52f"/><path d="M-1.2 -1.2l2.400 2.400m0-2.400l-2.400 2.400" stroke="#1f8a1f" stroke-width=".6"/><rect x="11.8" y="-2.2" width="4.400" height="4.400" fill="#2fb52f"/><path d="M12.8 -1.2l2.400 2.400m0-2.400l-2.400 2.400" stroke="#1f8a1f" stroke-width=".6"/><rect x="-2.2" y="10.8" width="4.400" height="4.400" fill="#2fb52f"/><path d="M-1.2 11.8l2.400 2.400m0-2.400l-2.400 2.400" stroke="#1f8a1f" stroke-width=".6"/><rect x="11.8" y="10.8" width="4.400" height="4.400" fill="#2fb52f"/><path d="M12.8 11.8l2.400 2.400m0-2.400l-2.400 2.400" stroke="#1f8a1f" stroke-width=".6"/></g><path d="M74 20l-6 5.500" stroke="#c8c8c8" stroke-width="2.400" stroke-linecap="round"/><circle cx="71" cy="15" r="4.500" fill="none" stroke="#b8c0cc" stroke-width="1"/><circle cx="73" cy="15" r="4.500" fill="none" stroke="#b8c0cc" stroke-width="1"/><g transform="translate(69.50 9.50)" ><circle cx="6.0" cy="6.0" r="5.0" fill="#b9d4f4" stroke="#d6dde8" stroke-width="1.6"/><circle cx="6.0" cy="6.0" r="4.2" fill="none" stroke="#5b8fd6" stroke-width=".8"/></g><g transform="translate(90.00 6.50)" ><g transform="scale(.95)"><path d="M0.500 10.500L9 5.500l10.500 4.500L11 17z" fill="none" stroke="#707080" stroke-width=".6"/><path d="M9.500 12V2.500" stroke="#1e6cf0" stroke-width="1.700"/><path d="M9.500 0l-2.400 3.600h4.800z" fill="#1e6cf0"/><path d="M9.500 12l7-5" stroke="#2fb52f" stroke-width="1.600"/><path d="M18.500 5.600l-4 .3 1.800 2.700z" fill="#2fb52f"/><path d="M9.500 12l6 5" stroke="#e02020" stroke-width="1.600"/><path d="M17.500 18.600l-3.800-.6 1.900-2.600z" fill="#e02020"/><circle cx="9.500" cy="12" r="1.700" fill="url(#gball)" stroke="#444" stroke-width=".4"/></g></g><g transform="translate(116.00 4.00)" ><path d="M12.0 2.5L12.0 13.5M3.5 16.5L12.0 13.5M20.5 16.5L12.0 13.5" fill="none" stroke="#050505" stroke-width="1.300" stroke-linejoin="round"/><path d="M12.0 2.5L21.0 6.0L12.0 10.0L3.0 6.0z" fill="url(#ggreen)" stroke="#0c3c0c" stroke-width=".5"/><path d="M12.0 2.5L21.0 6.0L12.0 10.0L3.0 6.0zM3.0 6.0L12.0 10.0L12.0 21.5L3.5 16.5zM12.0 10.0L21.0 6.0L20.5 16.5L12.0 21.5z" fill="none" stroke="#050505" stroke-width="1.300" stroke-linejoin="round"/></g><g transform="translate(144.00 4.00)" ><path d="M12.0 13.5L20.5 16.5L12.0 21.5L3.5 16.5z" fill="url(#ggreen)" stroke="#0c3c0c" stroke-width=".5"/><path d="M12.0 2.5L12.0 13.5M3.5 16.5L12.0 13.5M20.5 16.5L12.0 13.5" fill="none" stroke="#050505" stroke-width="1.300" stroke-linejoin="round"/><path d="M12.0 2.5L21.0 6.0L12.0 10.0L3.0 6.0zM3.0 6.0L12.0 10.0L12.0 21.5L3.5 16.5zM12.0 10.0L21.0 6.0L20.5 16.5L12.0 21.5z" fill="none" stroke="#050505" stroke-width="1.300" stroke-linejoin="round"/></g><g transform="translate(172.00 4.00)" ><path d="M12.0 2.5L3.0 6.0L3.5 16.5L12.0 13.5z" fill="url(#ggreen)" stroke="#0c3c0c" stroke-width=".5"/><path d="M12.0 2.5L12.0 13.5M3.5 16.5L12.0 13.5M20.5 16.5L12.0 13.5" fill="none" stroke="#050505" stroke-width="1.300" stroke-linejoin="round"/><path d="M12.0 2.5L21.0 6.0L12.0 10.0L3.0 6.0zM3.0 6.0L12.0 10.0L12.0 21.5L3.5 16.5zM12.0 10.0L21.0 6.0L20.5 16.5L12.0 21.5z" fill="none" stroke="#050505" stroke-width="1.300" stroke-linejoin="round"/></g><g transform="translate(200.00 4.00)" ><path d="M12.0 2.5L12.0 13.5M3.5 16.5L12.0 13.5M20.5 16.5L12.0 13.5" fill="none" stroke="#050505" stroke-width="1.300" stroke-linejoin="round"/><path d="M12.0 10.0L21.0 6.0L20.5 16.5L12.0 21.5z" fill="url(#ggreen)" stroke="#0c3c0c" stroke-width=".5"/><path d="M12.0 2.5L21.0 6.0L12.0 10.0L3.0 6.0zM3.0 6.0L12.0 10.0L12.0 21.5L3.5 16.5zM12.0 10.0L21.0 6.0L20.5 16.5L12.0 21.5z" fill="none" stroke="#050505" stroke-width="1.300" stroke-linejoin="round"/></g><g transform="translate(228.00 4.00)" ><path d="M12.0 2.5L12.0 13.5M3.5 16.5L12.0 13.5M20.5 16.5L12.0 13.5" fill="none" stroke="#050505" stroke-width="1.300" stroke-linejoin="round"/><path d="M3.0 6.0L12.0 10.0L12.0 21.5L3.5 16.5z" fill="url(#ggreen)" stroke="#0c3c0c" stroke-width=".5"/><path d="M12.0 2.5L21.0 6.0L12.0 10.0L3.0 6.0zM3.0 6.0L12.0 10.0L12.0 21.5L3.5 16.5zM12.0 10.0L21.0 6.0L20.5 16.5L12.0 21.5z" fill="none" stroke="#050505" stroke-width="1.300" stroke-linejoin="round"/></g><g transform="translate(256.00 4.00)" ><path d="M12.0 2.5L21.0 6.0L20.5 16.5L12.0 13.5z" fill="url(#ggreen)" stroke="#0c3c0c" stroke-width=".5"/><path d="M12.0 2.5L12.0 13.5M3.5 16.5L12.0 13.5M20.5 16.5L12.0 13.5" fill="none" stroke="#050505" stroke-width="1.300" stroke-linejoin="round"/><path d="M12.0 2.5L21.0 6.0L12.0 10.0L3.0 6.0zM3.0 6.0L12.0 10.0L12.0 21.5L3.5 16.5zM12.0 10.0L21.0 6.0L20.5 16.5L12.0 21.5z" fill="none" stroke="#050505" stroke-width="1.300" stroke-linejoin="round"/></g><g transform="translate(284.00 4.00)" ><path d="M12.0 2.5L21.0 6.0L12.0 10.0L3.0 6.0z" fill="#5ce05c"/><path d="M3.0 6.0L12.0 10.0L12.0 21.5L3.5 16.5z" fill="#2fc02f"/><path d="M12.0 10.0L21.0 6.0L20.5 16.5L12.0 21.5z" fill="#1a9a1a"/><path d="M12.0 2.5L21.0 6.0L12.0 10.0L3.0 6.0zM3.0 6.0L12.0 10.0L12.0 21.5L3.5 16.5zM12.0 10.0L21.0 6.0L20.5 16.5L12.0 21.5z" fill="none" stroke="#1a8a1a" stroke-width=".7" stroke-linejoin="round"/></g><g transform="translate(10.00 36.50)" ><path d="M0 2.09 V13.41 A5.50 2.09 0 0 0 11.00 13.41 V2.09 A5.50 2.09 0 0 0 0 2.09z" fill="none" stroke="#222" stroke-width="1.0"/><ellipse cx="5.50" cy="2.09" rx="5.50" ry="2.09" fill="none" stroke="#222" stroke-width="1.0"/></g><g transform="translate(10.00 64.50)" ><path d="M0 2.09 V13.41 A5.50 2.09 0 0 0 11.00 13.41 V2.09 A5.50 2.09 0 0 0 0 2.09z" fill="none" stroke="#222" stroke-width="1.0"/><ellipse cx="5.50" cy="2.09" rx="5.50" ry="2.09" fill="none" stroke="#222" stroke-width="1.0"/><path d="M0 13.41 A5.50 2.09 0 0 1 11.00 13.41" fill="none" stroke="#222" stroke-width=".7" stroke-opacity=".7"/></g><g transform="translate(10.50 92.50)" ><path d="M0 2.09 V13.41 A5.50 2.09 0 0 0 11.00 13.41 V2.09 A5.50 2.09 0 0 0 0 2.09z" fill="url(#gb)" stroke="#16244a" stroke-width="1.0"/><ellipse cx="5.50" cy="2.09" rx="5.50" ry="2.09" fill="#5a82cc" stroke="#16244a" stroke-width="1.0"/></g><g transform="translate(10.50 120.50)" ><path d="M0 2.09 V13.41 A5.50 2.09 0 0 0 11.00 13.41 V2.09 A5.50 2.09 0 0 0 0 2.09z" fill="url(#gl)" stroke="#606878" stroke-width="1.0"/><ellipse cx="5.50" cy="2.09" rx="5.50" ry="2.09" fill="#e6ecf8" stroke="#606878" stroke-width="1.0"/></g><g transform="translate(10.50 148.50)" ><path d="M0 2.09 V13.41 A5.50 2.09 0 0 0 11.00 13.41 V2.09 A5.50 2.09 0 0 0 0 2.09z" fill="#9a9aa8" stroke="#222" stroke-width="1.0"/><ellipse cx="5.50" cy="2.09" rx="5.50" ry="2.09" fill="#9a9aa8" stroke="#222" stroke-width="1.0"/><path d="M2.500 4l1.500 10M5 4.500l2 9.500M8 4.500l-2 9.500M9 4l-.5 10" stroke="#222" stroke-width=".7" fill="none"/></g></svg>
<div class="abs" style="left:-60px;top:-109px;width:1920px;height:1048px;pointer-events:none"><svg class="abs" style="left:1700px;top:780px;overflow:visible" width="220" height="140" viewBox="1700 780 220 140"><rect x="1836" y="864" width="67" height="40" rx="20" fill="#232a3c"/><path d="M1844 883.500h58" stroke="#3a4256" stroke-width="1"/><circle cx="1813.500" cy="883.500" r="29" fill="#2c354c" stroke="#242c40" stroke-width="1.500"/><path d="M1826 859.500A26.500 26.500 0 0 1 1806 909" fill="none" stroke="#6ad08c" stroke-width="1.300"/><path d="M1818 909.500A26.500 26.500 0 0 1 1806 909" fill="none" stroke="#d8d040" stroke-width="1.300"/><text x="1796" y="891" font-size="25" fill="#e8e8ee" stroke="#2c354c" stroke-width=".9" font-family="Liberation Sans,sans-serif" textLength="27" lengthAdjust="spacingAndGlyphs" style="font-weight:normal">55</text><text x="1824.500" y="890.500" font-size="10" fill="#e8e8ee" font-family="Liberation Sans,sans-serif">%</text><path d="M1849.500 876v-6.500m-2.800 2.800l2.800-2.800 2.800 2.800" stroke="#3a9af0" stroke-width="1.300" fill="none"/><path d="M1849.500 889.500v6.500m-2.800-2.800l2.800 2.800 2.800-2.800" stroke="#28c028" stroke-width="1.300" fill="none"/><text x="1862.500" y="876.500" font-size="11" fill="#f0f0f4" font-family="Liberation Sans,sans-serif">0.2<tspan font-size="8.500" fill="#c8ccd8">K/s</tspan></text><text x="1862.500" y="898.500" font-size="11" fill="#f0f0f4" font-family="Liberation Sans,sans-serif">0.4<tspan font-size="8.500" fill="#c8ccd8">K/s</tspan></text></svg><div class="abs" style="left:1748px;top:794px;width:156px;height:69px;border-radius:10px;background:linear-gradient(#9ccbe8 0%,#2a8ccc 9%,#bcdcf0 18%,#d4e8f6 50%,#bcdcf0 84%,#2a8ccc 93%,#9ccbe8 100%);opacity:.92"></div><div class="abs" style="left:1731px;top:799px;width:171px;height:59px;border-radius:9px;background:#fff;border:1.500px solid #1680c8"></div><div class="abs" style="left:1743.500px;top:803px;font-size:25px;line-height:28px;font-family:'Liberation Sans',sans-serif;color:#000;-webkit-text-stroke:.7px #000">A</div><svg class="abs" style="left:1700px;top:780px;overflow:visible" width="220" height="140" viewBox="1700 780 220 140"><circle cx="1782" cy="818.800" r="8" fill="#000"/><circle cx="1777.300" cy="816.300" r="7.200" fill="#fff"/><path d="M1746.500 837.500c1.500 0 1.500 2-.8 3.500" stroke="#000" stroke-width="1.800" fill="none"/><circle cx="1759" cy="850" r="1.100" fill="#000"/><path d="M1772 838.500l4-1h9l5 1.200.5 6.500-4 .3v7h-11v-7l-4-.3z" fill="#000"/><circle cx="1893.500" cy="822.500" r="5" fill="#e8102c"/><path d="M1868 828c12-6 24 0 29 14 2 8 0 16-4 19h-42z" fill="#0f9ae8" stroke="#0a5a98" stroke-width=".6"/><ellipse cx="1903" cy="852" rx="13.500" ry="10" fill="#fafafa" stroke="#a89898" stroke-width=".6" transform="rotate(25 1903 852)"/><path d="M1810 846c-6 8 6 14 30 14 18 2 40 2 56-4l-2-8z" fill="#0f9ae8"/><ellipse cx="1840.500" cy="827" rx="33.500" ry="33" fill="#0f9ae8" stroke="#0a5a98" stroke-width=".7"/><ellipse cx="1835.500" cy="832" rx="28.500" ry="26.500" fill="#fafafa" stroke="#a89898" stroke-width=".6"/><ellipse cx="1836" cy="805.500" rx="8.500" ry="9.500" fill="#fff" stroke="#a89898" stroke-width=".6" transform="rotate(-15 1836 805.500)"/><ellipse cx="1849" cy="810" rx="8.500" ry="9" fill="#fff" stroke="#a89898" stroke-width=".6" transform="rotate(-15 1849 810)"/><path d="M1833.500 806.500q3.500 3 6-.5" stroke="#111" stroke-width="1" fill="none"/><ellipse cx="1844" cy="810.500" rx="2.200" ry="3" fill="#111"/><circle cx="1844.300" cy="810" r=".8" fill="#fff"/><circle cx="1835" cy="814.500" r="4.500" fill="#e8101c"/><circle cx="1836" cy="813.300" r="1.400" fill="#fff"/><path d="M1832 819q-4 12-8 22M1811 836q20 10 50-4" stroke="#8a7a7a" stroke-width=".7" fill="none"/><path d="M1811 810l14 6M1808 818l14 2M1809 826l13-2M1841 824l20-1M1841 828l20 4M1840 831l16 10" stroke="#6a5a5a" stroke-width=".6" fill="none"/><path d="M1824 851q8 6 16 2" stroke="#c81020" stroke-width="2.200" fill="none"/><path d="M1865 850q4-5 5-9" stroke="#c81020" stroke-width="1.800" fill="none"/><circle cx="1832.500" cy="860" r="4.500" fill="#f0d020" stroke="#a88a10" stroke-width=".6"/><circle cx="1832" cy="860.500" r="1.300" fill="#6a4a4a"/><ellipse cx="1818" cy="841" rx="10" ry="7" fill="#fafafa" stroke="#a89898" stroke-width=".6" transform="rotate(30 1818 841)"/><ellipse cx="1849.500" cy="853" rx="8.500" ry="6.500" fill="#fafafa" stroke="#a89898" stroke-width=".6"/></svg></div>
</div>
<div id="st1"><div class="abs" style="left:1336px;top:3px;width:4px;height:15px;background-image:radial-gradient(#aab0c0 0.500px,rgba(0,0,0,0) 0.700px);background-size:2px 2px"></div><div class="abs" style="left:1341px;top:2px;width:133px;height:16px;background:#fff"></div><svg class="ico" style="left:1460px;top:4px" width="14" height="14"><circle cx="8.500" cy="5.200" r="3.600" fill="#f4f8ff" stroke="#3a62b0" stroke-width="1.300"/><path d="M5.800 8l-4 4.500" stroke="#3a62b0" stroke-width="1.800" stroke-linecap="round"/></svg><div class="abs" style="left:1476px;top:3px;width:4px;height:15px;background-image:radial-gradient(#aab0c0 0.500px,rgba(0,0,0,0) 0.700px);background-size:2px 2px"></div><div class="st" style="left:1485.5px;top:4.0px;">绝对 XY 上视图</div><div class="vsep" style="left:1592px;top:2px;height:15px"></div><div class="st" style="left:1600.5px;top:4.0px;">绝对视图</div><div class="abs" style="left:1657px;top:3px;width:4px;height:15px;background-image:radial-gradient(#aab0c0 0.500px,rgba(0,0,0,0) 0.700px);background-size:2px 2px"></div><div class="st" style="left:1668.0px;top:4.0px;font-weight:bold">LAYER0</div><div class="vsep" style="left:1727px;top:2px;height:15px"></div><div class="vsep" style="left:1757px;top:2px;height:15px"></div><div class="vsep" style="left:1800px;top:2px;height:15px"></div><div class="vsep" style="left:1844px;top:2px;height:15px"></div><div class="vsep" style="left:1887px;top:2px;height:15px"></div><div class="abs" style="left:1762px;top:4px;width:32px;height:12px;background:#46618c"></div><div class="abs" style="left:1805px;top:4px;width:32px;height:12px;background:#46618c"></div><div class="abs" style="left:1848px;top:4px;width:32px;height:12px;background:#46618c"></div><svg class="ico" style="left:1893px;top:2px" width="16" height="16"><circle cx="7.500" cy="7.500" r="6.800" fill="#1838c8" stroke="#0a1a70" stroke-width=".6"/><path d="M3 4c2-2 5-2.500 6-1.500 0 2-2 2-2 4 1 1.500 3 .5 3 3-1 2-3 3-4 2.500 0-2-1-2-2-3.500-.8-1.500-1.500-3-1-4.500z" fill="#28c028"/><path d="M10.500 3.500c1.500 0 2.500 1.500 3 3-1 .5-2.500-.5-3-3z" fill="#28c028"/><circle cx="5.500" cy="4.500" r="2" fill="#fff" fill-opacity=".35"/></svg></div>
<div id="st2"><div class="vsep" style="left:1132px;top:2px;height:15px"></div><div class="vsep" style="left:1175px;top:2px;height:15px"></div><div class="vsep" style="left:1206px;top:2px;height:15px"></div><div class="vsep" style="left:1237px;top:2px;height:15px"></div><div class="vsep" style="left:1268px;top:2px;height:15px"></div><div class="vsep" style="left:1299px;top:2px;height:15px"></div><div class="vsep" style="left:1330px;top:2px;height:15px"></div><div class="vsep" style="left:1361px;top:2px;height:15px"></div><div class="vsep" style="left:1392px;top:2px;height:15px"></div><div class="vsep" style="left:1423px;top:2px;height:15px"></div><div class="vsep" style="left:1454px;top:2px;height:15px"></div><div class="vsep" style="left:1580px;top:2px;height:15px"></div><div class="vsep" style="left:1654px;top:2px;height:15px"></div><div class="st" style="left:1140.5px;top:2.5px;">拴牢</div><svg class="ico" style="left:0;top:0" width="1920" height="19"><defs><linearGradient id="gb" x1="0" x2="1"><stop offset="0" stop-color="#8fb4ee"/><stop offset=".35" stop-color="#5e86d2"/><stop offset="1" stop-color="#2c4a8e"/></linearGradient><linearGradient id="gl" x1="0" x2="1"><stop offset="0" stop-color="#eaf0fb"/><stop offset="1" stop-color="#b4c6e6"/></linearGradient><linearGradient id="gdoc" x1="0" y1="0" x2="1" y2="1"><stop offset="0" stop-color="#ffffff"/><stop offset="1" stop-color="#a9c4f2"/></linearGradient><linearGradient id="gfold" x1="0" y1="0" x2="0" y2="1"><stop offset="0" stop-color="#fbe39a"/><stop offset="1" stop-color="#e9b94b"/></linearGradient><linearGradient id="ggrey" x1="0" y1="0" x2="0" y2="1"><stop offset="0" stop-color="#c9c9c9"/><stop offset="1" stop-color="#7d7d7d"/></linearGradient><linearGradient id="ggem" x1="0" y1="0" x2="1" y2="1"><stop offset="0" stop-color="#6c9cf0"/><stop offset="1" stop-color="#1c3c94"/></linearGradient><radialGradient id="gsmile" cx=".4" cy=".35" r=".7"><stop offset="0" stop-color="#fff6a0"/><stop offset="1" stop-color="#f0b020"/></radialGradient><radialGradient id="gball" cx=".35" cy=".3" r=".8"><stop offset="0" stop-color="#ffffff"/><stop offset="1" stop-color="#555"/></radialGradient><linearGradient id="ggreen" x1="0" y1="0" x2="1" y2="1"><stop offset="0" stop-color="#8ee060"/><stop offset="1" stop-color="#23a023"/></linearGradient></defs><rect x="1182.500" y="1.500" width="15" height="15" fill="#c8ccd8" stroke="#7a7e8c" stroke-width="1"/><g transform="translate(1184.20 3.00)" ><g transform="scale(.8 .92)"><path d="M1.5 5.5 Q2.5 0.8 8 0.8 Q12 1 13 3.4 L14.6 1.6 L14.8 7 L9.6 6.4 L11.3 4.9 Q10 3.2 7.8 3.2 Q4.5 3.3 4 5.8z" fill="#e07080" stroke="#b84858" stroke-width=".5"/><path d="M13.4 7.6 Q12.6 12.2 7 12.2 Q3 12 2 9.6 L0.4 11.4 L0.2 6 L5.4 6.6 L3.7 8.1 Q5 9.8 7.2 9.8 Q10.5 9.7 11 7.2z" fill="#e07080" stroke="#b84858" stroke-width=".5"/></g></g><rect x="1212" y="0.500" width="18" height="18" fill="#fbe278"/><path d="M1216 2l2 4 4-2-1 4 4 1-4 2 1 4-4-2-2 3-1-4-3.500 0 2.500-3-2.500-3 4 0z" fill="#d060c0" stroke="#e8a020" stroke-width=".5"/><path d="M1220 6.500l1 9.500 2.300-2.500 3 4.300 1.700-1.200-3-4.300 3.200-.8z" fill="#e8ecf4" stroke="#777" stroke-width=".7"/><path d="M1247 7.500l6-5 7 1-.3 3.500-5 .8-1.500 1.500-3 .5z" fill="#e8b878" stroke="#9a6a30" stroke-width=".6"/><rect x="1246.500" y="9" width="9" height="8" fill="#dce8fa" stroke="#5a78c0" stroke-width=".8"/><path d="M1249 11v4M1247.500 13h3M1253 11v4M1251.500 13h3" stroke="#2a4ac0" stroke-width=".9"/><ellipse cx="1285.500" cy="16.600" rx="6" ry="1.500" fill="#777" fill-opacity=".45"/><text x="1284.500" y="16" font-size="18" font-weight="bold" fill="#4a78c8" stroke="#2a4a90" stroke-width=".4" text-anchor="middle" font-family="Liberation Sans,sans-serif">?</text><path d="M1306.5 4.4l4.8-2.4 4.8 2.4-4.8 2.4z" fill="#6aa0f0" stroke="#223" stroke-width=".5"/><path d="M1306.5 4.4v4.8l4.8 2.4v-4.8z" fill="#4a80e0" stroke="#223" stroke-width=".5"/><path d="M1316.0 4.4v4.8l-4.8 2.4v-4.8z" fill="#2a58b8" stroke="#223" stroke-width=".5"/><path d="M1313.0 10.0l5.0-2.5 5.0 2.5-5.0 2.5z" fill="#9ab8c8" stroke="#223" stroke-width=".5"/><path d="M1313.0 10.0v5.0l5.0 2.5v-5.0z" fill="#6a8898" stroke="#223" stroke-width=".5"/><path d="M1323.0 10.0v5.0l-5.0 2.5v-5.0z" fill="#4a6070" stroke="#223" stroke-width=".5"/><path d="M1305 12.500h7" stroke="#e81010" stroke-width="1.600"/><path d="M1309 9.500l3.500 3-3.500 3" stroke="#e81010" stroke-width="1.500" fill="none"/><rect x="1336" y="0.500" width="18" height="18" fill="#fbe278"/><path d="M1337.500 5.500l7.500-3 7.500 3-7.500 3z" fill="#e830e8" stroke="#223" stroke-width=".5"/><path d="M1337.500 5.500v8l7.500 3.500v-8.500z" fill="#9ac0c8" stroke="#2a50c0" stroke-width="1"/><path d="M1352.500 5.500v8l-7.500 3.500v-8.500z" fill="#6a98a0" stroke="#2a50c0" stroke-width="1"/><rect x="1371.500" y="1.500" width="9" height="15.500" fill="#e8e8e0" stroke="#6a6e60" stroke-width="1"/><rect x="1372.500" y="6" width="7" height="3" fill="#e8a848"/><path d="M1372 5.500h8M1372 9.500h8M1372 13h8" stroke="#6a6e60" stroke-width=".8"/><path d="M1407.500 3.500a6.500 6.500 0 1 1-6 4" stroke="#1a9a1a" stroke-width="2" fill="none"/><path d="M1408.500 0l-4 3.500 4 3.500z" fill="#1a9a1a"/><path d="M1404.500 10.500h5M1407 8v5" stroke="#2a3ab0" stroke-width="1.200"/><rect x="1430.500" y="1.500" width="15" height="15" fill="#e8ecf4" stroke="#555a68" stroke-width="1.200"/><path d="M1438 1.500v15M1430.500 9h15" stroke="#3a3e50" stroke-width="1.400"/></svg><div class="st" style="left:1463.0px;top:2.5px;">LS: 1.00 PS: 1.00</div><div class="st" style="left:1589.0px;top:2.5px;">单位: 毫米</div><div class="st" style="left:1663.0px;top:2.5px;word-spacing:1.100px;letter-spacing:.2px">X = 1836.866 Y = 3419.774 Z = 0000.000</div></div>
<div id="task"><div class="abs" style="left:393px;top:0;width:45px;height:8px;background:#67625a"></div><div class="abs" style="left:438px;top:0;width:3px;height:8px;background:#55524a"></div><div class="abs" style="left:1814px;top:4px;font-size:12px;line-height:12px;color:#fff;font-weight:bold;letter-spacing:.5px">11:11</div></div>
</body></html>
